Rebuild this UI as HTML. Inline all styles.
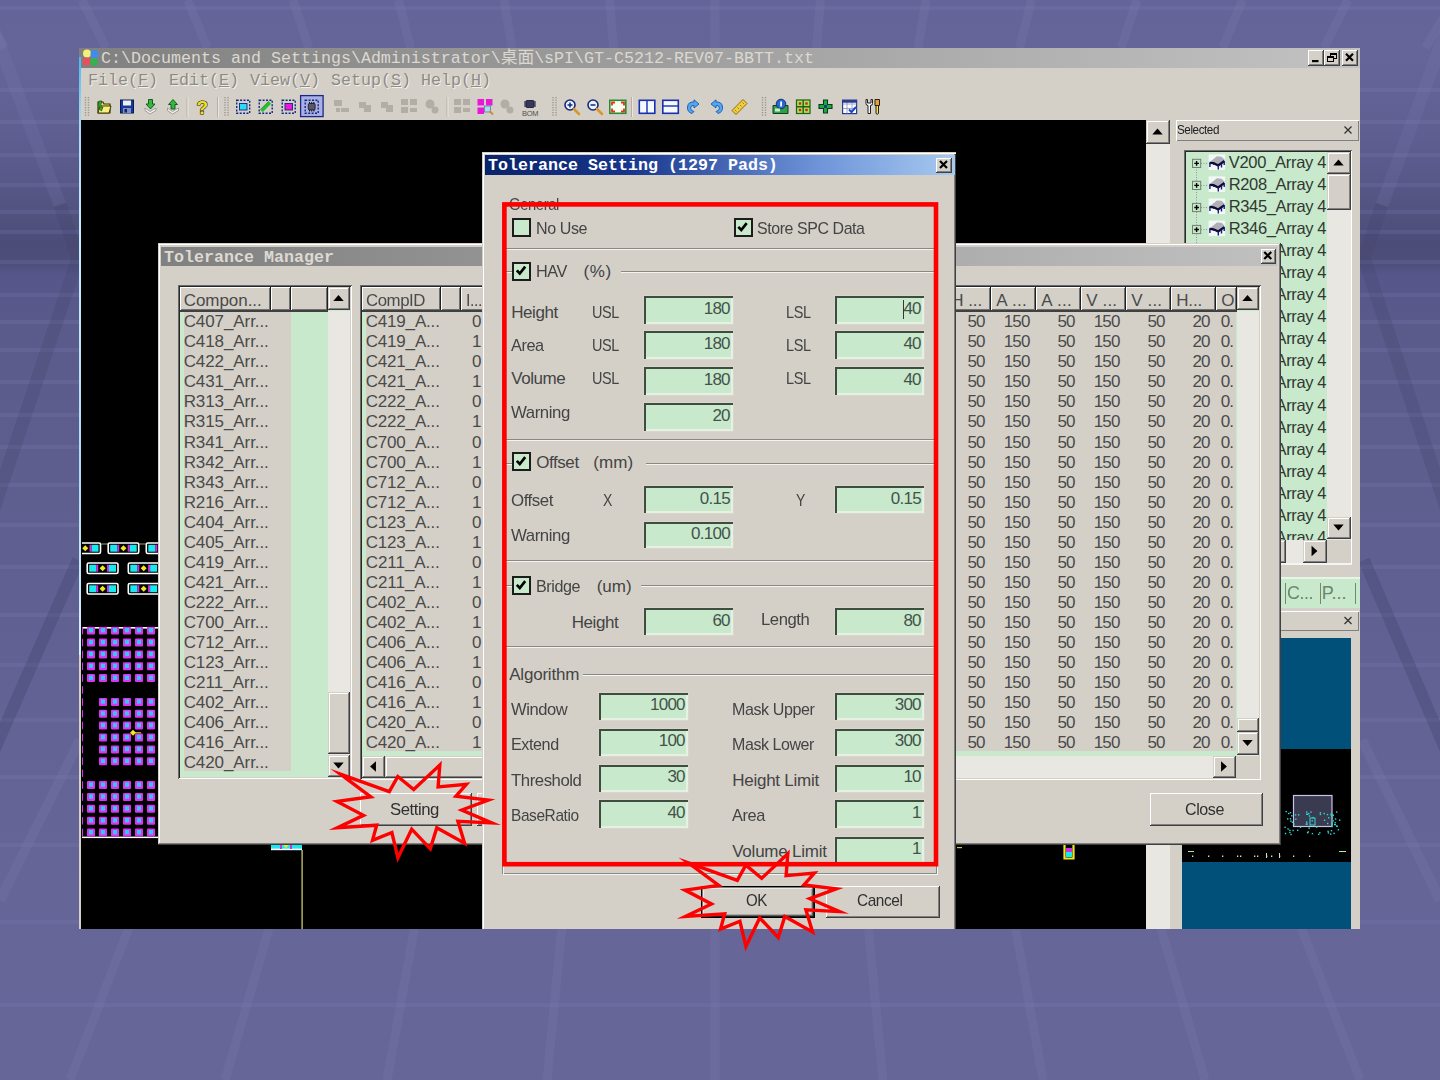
<!DOCTYPE html><html><head><meta charset='utf-8'><title>Tolerance Setting</title><style>
html,body{margin:0;padding:0;}
body{width:1440px;height:1080px;overflow:hidden;position:relative;background:#666698;font-family:"Liberation Sans",sans-serif;}
.a{position:absolute;box-sizing:border-box;}
.face{background:#d4d0c8;}
.win{background:#d4d0c8;box-shadow:inset -1px -1px 0 #404040,inset 1px 1px 0 #d4d0c8,inset -2px -2px 0 #808080,inset 2px 2px 0 #fff;}
.btn{background:#d4d0c8;box-shadow:inset -1px -1px 0 #404040,inset 1px 1px 0 #fff,inset -2px -2px 0 #808080;}
.sb{background:#d4d0c8;box-shadow:inset -1px -1px 0 #404040,inset 1px 1px 0 #d4d0c8,inset -2px -2px 0 #808080,inset 2px 2px 0 #fff;}
.sunk{box-shadow:inset 1px 1px 0 #6a6a6a,inset -1px -1px 0 #fff,inset 2px 2px 0 #282828,inset -2px -2px 0 #d4d0c8;}
.fld{background:#c9e9cd;box-shadow:inset 2px 2px 0 #3f4d41,inset -2px -2px 0 #e6f1e4,0 0 0 1px #d9d6ce;color:#46564a;}
.mono{font-family:"Liberation Mono","Noto Sans CJK SC",monospace;white-space:nowrap;}
.t{white-space:nowrap;color:#3c3c3c;font-size:17px;line-height:20px;}
.dith{background:#e9e7e2;}
.chk{background:#c9e9cd;border:2px solid #1c1c1c;}
.hl{height:2px;border-top:1px solid #8a8882;border-bottom:1px solid #f6f4f0;}
.hd{background:#d4d0c8;box-shadow:inset -1px -1px 0 #202020,inset 1px 1px 0 #fff,inset -2px -2px 0 #707070;}
svg{position:absolute;overflow:visible;}
</style></head><body><div class="a" id="bg" style="left:0;top:0;width:1440px;height:1080px;background:linear-gradient(180deg,#64649a 0px,#656599 60px,#5f5f92 130px,#585889 180px,#52527f 215px,#4c4c78 245px,#4e4e7a 262px,#56568a 275px,#5a5a8b 330px,#5d5d8e 450px,#606092 600px,#646496 800px,#666699 950px,#666699 1080px);"></div>
<svg class="a" style="left:0;top:0" width="1440" height="1080"><rect x="0" y="6" width="1440" height="4" fill="#8080b4" fill-opacity="0.22"/><rect x="0" y="88" width="1440" height="4" fill="#8080b4" fill-opacity="0.22"/><rect x="0" y="120" width="1440" height="4" fill="#8080b4" fill-opacity="0.22"/><rect x="0" y="153" width="1440" height="4" fill="#8080b4" fill-opacity="0.22"/><rect x="0" y="183" width="1440" height="4" fill="#8080b4" fill-opacity="0.22"/><rect x="0" y="210" width="1440" height="4" fill="#8080b4" fill-opacity="0.22"/><rect x="0" y="230" width="1440" height="4" fill="#8080b4" fill-opacity="0.22"/><rect x="0" y="260" width="1440" height="4" fill="#8080b4" fill-opacity="0.22"/><rect x="0" y="293" width="1440" height="4" fill="#8080b4" fill-opacity="0.22"/><rect x="0" y="320" width="1440" height="4" fill="#8080b4" fill-opacity="0.22"/><rect x="0" y="348" width="1440" height="4" fill="#8080b4" fill-opacity="0.22"/><rect x="0" y="380" width="1440" height="4" fill="#8080b4" fill-opacity="0.22"/><rect x="0" y="413" width="1440" height="4" fill="#8080b4" fill-opacity="0.22"/><rect x="0" y="445" width="1440" height="4" fill="#8080b4" fill-opacity="0.22"/><rect x="0" y="483" width="1440" height="4" fill="#8080b4" fill-opacity="0.22"/><rect x="0" y="523" width="1440" height="4" fill="#8080b4" fill-opacity="0.22"/><rect x="0" y="565" width="1440" height="4" fill="#8080b4" fill-opacity="0.22"/><rect x="0" y="613" width="1440" height="4" fill="#8080b4" fill-opacity="0.22"/><rect x="0" y="663" width="1440" height="4" fill="#8080b4" fill-opacity="0.22"/><rect x="0" y="718" width="1440" height="4" fill="#8080b4" fill-opacity="0.22"/><rect x="0" y="775" width="1440" height="4" fill="#8080b4" fill-opacity="0.22"/><rect x="0" y="843" width="1440" height="4" fill="#8080b4" fill-opacity="0.22"/><rect x="0" y="920" width="1440" height="4" fill="#8080b4" fill-opacity="0.22"/><rect x="0" y="1003" width="1440" height="4" fill="#8080b4" fill-opacity="0.22"/><path d="M715,925 L715,1080 M868,925 L883,1080 M562,925 L547,1080 M1015,925 L1043,1080 M415,925 L387,1080 M1160,925 L1205,1080 M270,925 L225,1080 M1300,925 L1360,1080 M130,925 L70,1080 M1450,925 L1525,1080 M-20,925 L-95,1080 M-23.5,0 L4.5,48 M82.0,0 L106.0,48 M187.5,0 L207.5,48 M293.0,0 L309.0,48 M398.5,0 L410.5,48 M504.0,0 L512.0,48 M609.5,0 L613.5,48 M715.0,0 L715.0,48 M820.5,0 L816.5,48 M926.0,0 L918.0,48 M1031.5,0 L1019.5,48 M1137.0,0 L1121.0,48 M1242.5,0 L1222.5,48 M1348.0,0 L1324.0,48 M1453.5,0 L1425.5,48 " stroke="#8080b4" stroke-opacity="0.2" stroke-width="9" fill="none"/><path d="M-10,20 L60,205 M1450,20 L1382,205" stroke="#8484b8" stroke-opacity="0.16" stroke-width="13" fill="none"/><path d="M60,205 L78,258 L-10,520 M1382,205 L1364,258 L1450,520" stroke="#40406a" stroke-opacity="0.22" stroke-width="13" fill="none"/><path d="M78,560 L-10,760 M1364,560 L1450,760" stroke="#40406a" stroke-opacity="0.3" stroke-width="12" fill="none"/><path d="M80,740 L0,900 M1362,740 L1440,900" stroke="#8080b4" stroke-opacity="0.2" stroke-width="10" fill="none"/></svg>
<div class="a face" style="left:79px;top:48px;width:1281px;height:881px;"></div>
<div class="a " style="left:79px;top:48px;width:1281px;height:20px;background:linear-gradient(90deg,#808080 0%,#c2c2c2 100%);"></div>
<svg class="a" style="left:82px;top:49px" width="18" height="18"><circle cx="5" cy="4.5" r="4" fill="#f4f07a"/><circle cx="12.5" cy="5" r="4" fill="#3d8df0"/><circle cx="4.5" cy="12.5" r="4" fill="#e8505a"/><circle cx="12" cy="13" r="4" fill="#38b050"/></svg>
<div class="a mono" style="left:101px;top:48px;font-size:16.67px;line-height:21px;color:#dcd8d0;">C:\Documents and Settings\Administrator\桌面\sPI\GT-C5212-REV07-BBTT.txt</div>
<div class="a btn" style="left:1308px;top:50px;width:16px;height:15.5px;"></div>
<div class="a btn" style="left:1324px;top:50px;width:16px;height:15.5px;"></div>
<svg class="a" style="left:0;top:0" width="1" height="1"><rect x="1312" y="60" width="6.5" height="2.2" fill="#000"/><rect x="1330.5" y="53.5" width="6" height="5" fill="none" stroke="#000"/><rect x="1330" y="53" width="7" height="2" fill="#000"/><rect x="1327.5" y="56.5" width="6" height="5" fill="#d4d0c8" stroke="#000"/><rect x="1327" y="56" width="7" height="2" fill="#000"/></svg>
<div class="a btn" style="left:1342px;top:50px;width:16px;height:15.5px;"></div>
<svg class="a" style="left:0;top:0" width="1" height="1"><path d="M1346.0,53.75 L1353.0,60.75 M1353.0,53.75 L1346.0,60.75" stroke="#000" stroke-width="2.2" fill="none"/></svg>
<div class="a mono" style="left:88px;top:70px;font-size:16.67px;line-height:22px;color:#8e8a84;text-shadow:1px 1px 0 #f2f0ea;">File(<u>F</u>)</div>
<div class="a mono" style="left:169px;top:70px;font-size:16.67px;line-height:22px;color:#8e8a84;text-shadow:1px 1px 0 #f2f0ea;">Edit(<u>E</u>)</div>
<div class="a mono" style="left:250px;top:70px;font-size:16.67px;line-height:22px;color:#8e8a84;text-shadow:1px 1px 0 #f2f0ea;">View(<u>V</u>)</div>
<div class="a mono" style="left:331px;top:70px;font-size:16.67px;line-height:22px;color:#8e8a84;text-shadow:1px 1px 0 #f2f0ea;">Setup(<u>S</u>)</div>
<div class="a mono" style="left:421px;top:70px;font-size:16.67px;line-height:22px;color:#8e8a84;text-shadow:1px 1px 0 #f2f0ea;">Help(<u>H</u>)</div>
<div class="a " style="left:81px;top:120px;width:1065px;height:809px;background:#000;"></div>
<div class="a " style="left:79px;top:57px;width:2px;height:598px;background:linear-gradient(180deg,#48b8f0,#9fd8f4 10%,#c8ecff 30%,#a8dcf4 70%,#d8f0ff);"></div>
<div class="a dith" style="left:1146px;top:120px;width:24px;height:809px;"></div>
<div class="a sb" style="left:1146px;top:120px;width:24px;height:24px;"></div>
<svg class="a" style="left:0;top:0" width="1" height="1"><polygon points="1152.3,134.412 1162.7,134.412 1157.5,128.588" fill="#000"/></svg>
<svg class="a" style="left:0;top:0" width="1440" height="1080"><clipPath id="cv"><rect x="82" y="120" width="76" height="809"/></clipPath><g clip-path="url(#cv)"><path d="M100,544 H108 M139,544 H146" stroke="#a0a060" stroke-width="1"/><rect x="70" y="543" width="30.5" height="10.5" rx="1.5" fill="#000" stroke="#fff" stroke-width="1.6"/><rect x="72" y="544.8" width="7" height="6.9" fill="#18e8f0"/><rect x="91.5" y="544.8" width="7" height="6.9" fill="#18e8f0"/><rect x="79" y="544.8" width="2" height="6.9" fill="#d030e0"/><rect x="89.5" y="544.8" width="2" height="6.9" fill="#d030e0"/><polygon points="82.25,548.25 85.25,545.25 88.25,548.25 85.25,551.25" fill="#f0e820"/><rect x="108.2" y="543" width="30.5" height="10.5" rx="1.5" fill="#000" stroke="#fff" stroke-width="1.6"/><rect x="110.2" y="544.8" width="7" height="6.9" fill="#18e8f0"/><rect x="129.7" y="544.8" width="7" height="6.9" fill="#18e8f0"/><rect x="117.2" y="544.8" width="2" height="6.9" fill="#d030e0"/><rect x="127.69999999999999" y="544.8" width="2" height="6.9" fill="#d030e0"/><polygon points="120.45,548.25 123.45,545.25 126.45,548.25 123.45,551.25" fill="#f0e820"/><rect x="146.3" y="543" width="30.5" height="10.5" rx="1.5" fill="#000" stroke="#fff" stroke-width="1.6"/><rect x="148.3" y="544.8" width="7" height="6.9" fill="#18e8f0"/><rect x="167.8" y="544.8" width="7" height="6.9" fill="#18e8f0"/><rect x="155.3" y="544.8" width="2" height="6.9" fill="#d030e0"/><rect x="165.8" y="544.8" width="2" height="6.9" fill="#d030e0"/><polygon points="158.55,548.25 161.55,545.25 164.55,548.25 161.55,551.25" fill="#f0e820"/><rect x="87.2" y="563" width="30.8" height="10.5" rx="1.5" fill="#000" stroke="#fff" stroke-width="1.6"/><rect x="89.2" y="564.8" width="7" height="6.9" fill="#18e8f0"/><rect x="109.0" y="564.8" width="7" height="6.9" fill="#18e8f0"/><rect x="96.2" y="564.8" width="2" height="6.9" fill="#d030e0"/><rect x="107.0" y="564.8" width="2" height="6.9" fill="#d030e0"/><polygon points="99.60000000000001,568.25 102.60000000000001,565.25 105.60000000000001,568.25 102.60000000000001,571.25" fill="#f0e820"/><rect x="128.3" y="563" width="30.8" height="10.5" rx="1.5" fill="#000" stroke="#fff" stroke-width="1.6"/><rect x="130.3" y="564.8" width="7" height="6.9" fill="#18e8f0"/><rect x="150.10000000000002" y="564.8" width="7" height="6.9" fill="#18e8f0"/><rect x="137.3" y="564.8" width="2" height="6.9" fill="#d030e0"/><rect x="148.10000000000002" y="564.8" width="2" height="6.9" fill="#d030e0"/><polygon points="140.70000000000002,568.25 143.70000000000002,565.25 146.70000000000002,568.25 143.70000000000002,571.25" fill="#f0e820"/><rect x="87.2" y="583.5" width="30.8" height="10.5" rx="1.5" fill="#000" stroke="#fff" stroke-width="1.6"/><rect x="89.2" y="585.3" width="7" height="6.9" fill="#18e8f0"/><rect x="109.0" y="585.3" width="7" height="6.9" fill="#18e8f0"/><rect x="96.2" y="585.3" width="2" height="6.9" fill="#d030e0"/><rect x="107.0" y="585.3" width="2" height="6.9" fill="#d030e0"/><polygon points="99.60000000000001,588.75 102.60000000000001,585.75 105.60000000000001,588.75 102.60000000000001,591.75" fill="#f0e820"/><rect x="128.3" y="583.5" width="30.8" height="10.5" rx="1.5" fill="#000" stroke="#fff" stroke-width="1.6"/><rect x="130.3" y="585.3" width="7" height="6.9" fill="#18e8f0"/><rect x="150.10000000000002" y="585.3" width="7" height="6.9" fill="#18e8f0"/><rect x="137.3" y="585.3" width="2" height="6.9" fill="#d030e0"/><rect x="148.10000000000002" y="585.3" width="2" height="6.9" fill="#d030e0"/><polygon points="140.70000000000002,588.75 143.70000000000002,585.75 146.70000000000002,588.75 143.70000000000002,591.75" fill="#f0e820"/><rect x="82" y="627" width="80" height="1.6" fill="#fff"/><rect x="82" y="836.6" width="80" height="1.6" fill="#fff"/><rect x="75.0" y="626.6" width="8" height="8" rx="1" fill="#e030f0"/><rect x="77.0" y="628.0" width="4" height="4.4" fill="#30c8f8"/><rect x="87.0" y="626.6" width="8" height="8" rx="1" fill="#e030f0"/><rect x="89.0" y="628.0" width="4" height="4.4" fill="#30c8f8"/><rect x="99.0" y="626.6" width="8" height="8" rx="1" fill="#e030f0"/><rect x="101.0" y="628.0" width="4" height="4.4" fill="#30c8f8"/><rect x="111.0" y="626.6" width="8" height="8" rx="1" fill="#e030f0"/><rect x="113.0" y="628.0" width="4" height="4.4" fill="#30c8f8"/><rect x="123.0" y="626.6" width="8" height="8" rx="1" fill="#e030f0"/><rect x="125.0" y="628.0" width="4" height="4.4" fill="#30c8f8"/><rect x="135.0" y="626.6" width="8" height="8" rx="1" fill="#e030f0"/><rect x="137.0" y="628.0" width="4" height="4.4" fill="#30c8f8"/><rect x="147.0" y="626.6" width="8" height="8" rx="1" fill="#e030f0"/><rect x="149.0" y="628.0" width="4" height="4.4" fill="#30c8f8"/><rect x="75.0" y="638.5" width="8" height="8" rx="1" fill="#e030f0"/><rect x="77.0" y="639.9" width="4" height="4.4" fill="#30c8f8"/><rect x="87.0" y="638.5" width="8" height="8" rx="1" fill="#e030f0"/><rect x="89.0" y="639.9" width="4" height="4.4" fill="#30c8f8"/><rect x="99.0" y="638.5" width="8" height="8" rx="1" fill="#e030f0"/><rect x="101.0" y="639.9" width="4" height="4.4" fill="#30c8f8"/><rect x="111.0" y="638.5" width="8" height="8" rx="1" fill="#e030f0"/><rect x="113.0" y="639.9" width="4" height="4.4" fill="#30c8f8"/><rect x="123.0" y="638.5" width="8" height="8" rx="1" fill="#e030f0"/><rect x="125.0" y="639.9" width="4" height="4.4" fill="#30c8f8"/><rect x="135.0" y="638.5" width="8" height="8" rx="1" fill="#e030f0"/><rect x="137.0" y="639.9" width="4" height="4.4" fill="#30c8f8"/><rect x="147.0" y="638.5" width="8" height="8" rx="1" fill="#e030f0"/><rect x="149.0" y="639.9" width="4" height="4.4" fill="#30c8f8"/><rect x="75.0" y="650.4" width="8" height="8" rx="1" fill="#e030f0"/><rect x="77.0" y="651.8" width="4" height="4.4" fill="#30c8f8"/><rect x="87.0" y="650.4" width="8" height="8" rx="1" fill="#e030f0"/><rect x="89.0" y="651.8" width="4" height="4.4" fill="#30c8f8"/><rect x="99.0" y="650.4" width="8" height="8" rx="1" fill="#e030f0"/><rect x="101.0" y="651.8" width="4" height="4.4" fill="#30c8f8"/><rect x="111.0" y="650.4" width="8" height="8" rx="1" fill="#e030f0"/><rect x="113.0" y="651.8" width="4" height="4.4" fill="#30c8f8"/><rect x="123.0" y="650.4" width="8" height="8" rx="1" fill="#e030f0"/><rect x="125.0" y="651.8" width="4" height="4.4" fill="#30c8f8"/><rect x="135.0" y="650.4" width="8" height="8" rx="1" fill="#e030f0"/><rect x="137.0" y="651.8" width="4" height="4.4" fill="#30c8f8"/><rect x="147.0" y="650.4" width="8" height="8" rx="1" fill="#e030f0"/><rect x="149.0" y="651.8" width="4" height="4.4" fill="#30c8f8"/><rect x="75.0" y="662.2" width="8" height="8" rx="1" fill="#e030f0"/><rect x="77.0" y="663.6" width="4" height="4.4" fill="#30c8f8"/><rect x="87.0" y="662.2" width="8" height="8" rx="1" fill="#e030f0"/><rect x="89.0" y="663.6" width="4" height="4.4" fill="#30c8f8"/><rect x="99.0" y="662.2" width="8" height="8" rx="1" fill="#e030f0"/><rect x="101.0" y="663.6" width="4" height="4.4" fill="#30c8f8"/><rect x="111.0" y="662.2" width="8" height="8" rx="1" fill="#e030f0"/><rect x="113.0" y="663.6" width="4" height="4.4" fill="#30c8f8"/><rect x="123.0" y="662.2" width="8" height="8" rx="1" fill="#e030f0"/><rect x="125.0" y="663.6" width="4" height="4.4" fill="#30c8f8"/><rect x="135.0" y="662.2" width="8" height="8" rx="1" fill="#e030f0"/><rect x="137.0" y="663.6" width="4" height="4.4" fill="#30c8f8"/><rect x="147.0" y="662.2" width="8" height="8" rx="1" fill="#e030f0"/><rect x="149.0" y="663.6" width="4" height="4.4" fill="#30c8f8"/><rect x="75.0" y="674.1" width="8" height="8" rx="1" fill="#e030f0"/><rect x="77.0" y="675.5" width="4" height="4.4" fill="#30c8f8"/><rect x="87.0" y="674.1" width="8" height="8" rx="1" fill="#e030f0"/><rect x="89.0" y="675.5" width="4" height="4.4" fill="#30c8f8"/><rect x="99.0" y="674.1" width="8" height="8" rx="1" fill="#e030f0"/><rect x="101.0" y="675.5" width="4" height="4.4" fill="#30c8f8"/><rect x="111.0" y="674.1" width="8" height="8" rx="1" fill="#e030f0"/><rect x="113.0" y="675.5" width="4" height="4.4" fill="#30c8f8"/><rect x="123.0" y="674.1" width="8" height="8" rx="1" fill="#e030f0"/><rect x="125.0" y="675.5" width="4" height="4.4" fill="#30c8f8"/><rect x="135.0" y="674.1" width="8" height="8" rx="1" fill="#e030f0"/><rect x="137.0" y="675.5" width="4" height="4.4" fill="#30c8f8"/><rect x="147.0" y="674.1" width="8" height="8" rx="1" fill="#e030f0"/><rect x="149.0" y="675.5" width="4" height="4.4" fill="#30c8f8"/><rect x="75.0" y="686.0" width="8" height="8" rx="1" fill="#e030f0"/><rect x="77.0" y="687.4" width="4" height="4.4" fill="#30c8f8"/><rect x="75.0" y="697.9" width="8" height="8" rx="1" fill="#e030f0"/><rect x="77.0" y="699.3" width="4" height="4.4" fill="#30c8f8"/><rect x="99.0" y="697.9" width="8" height="8" rx="1" fill="#e030f0"/><rect x="101.0" y="699.3" width="4" height="4.4" fill="#30c8f8"/><rect x="111.0" y="697.9" width="8" height="8" rx="1" fill="#e030f0"/><rect x="113.0" y="699.3" width="4" height="4.4" fill="#30c8f8"/><rect x="123.0" y="697.9" width="8" height="8" rx="1" fill="#e030f0"/><rect x="125.0" y="699.3" width="4" height="4.4" fill="#30c8f8"/><rect x="135.0" y="697.9" width="8" height="8" rx="1" fill="#e030f0"/><rect x="137.0" y="699.3" width="4" height="4.4" fill="#30c8f8"/><rect x="147.0" y="697.9" width="8" height="8" rx="1" fill="#e030f0"/><rect x="149.0" y="699.3" width="4" height="4.4" fill="#30c8f8"/><rect x="75.0" y="709.8" width="8" height="8" rx="1" fill="#e030f0"/><rect x="77.0" y="711.2" width="4" height="4.4" fill="#30c8f8"/><rect x="99.0" y="709.8" width="8" height="8" rx="1" fill="#e030f0"/><rect x="101.0" y="711.2" width="4" height="4.4" fill="#30c8f8"/><rect x="111.0" y="709.8" width="8" height="8" rx="1" fill="#e030f0"/><rect x="113.0" y="711.2" width="4" height="4.4" fill="#30c8f8"/><rect x="123.0" y="709.8" width="8" height="8" rx="1" fill="#e030f0"/><rect x="125.0" y="711.2" width="4" height="4.4" fill="#30c8f8"/><rect x="135.0" y="709.8" width="8" height="8" rx="1" fill="#e030f0"/><rect x="137.0" y="711.2" width="4" height="4.4" fill="#30c8f8"/><rect x="147.0" y="709.8" width="8" height="8" rx="1" fill="#e030f0"/><rect x="149.0" y="711.2" width="4" height="4.4" fill="#30c8f8"/><rect x="75.0" y="721.6" width="8" height="8" rx="1" fill="#e030f0"/><rect x="77.0" y="723.0" width="4" height="4.4" fill="#30c8f8"/><rect x="99.0" y="721.6" width="8" height="8" rx="1" fill="#e030f0"/><rect x="101.0" y="723.0" width="4" height="4.4" fill="#30c8f8"/><rect x="111.0" y="721.6" width="8" height="8" rx="1" fill="#e030f0"/><rect x="113.0" y="723.0" width="4" height="4.4" fill="#30c8f8"/><rect x="123.0" y="721.6" width="8" height="8" rx="1" fill="#e030f0"/><rect x="125.0" y="723.0" width="4" height="4.4" fill="#30c8f8"/><rect x="135.0" y="721.6" width="8" height="8" rx="1" fill="#e030f0"/><rect x="137.0" y="723.0" width="4" height="4.4" fill="#30c8f8"/><rect x="147.0" y="721.6" width="8" height="8" rx="1" fill="#e030f0"/><rect x="149.0" y="723.0" width="4" height="4.4" fill="#30c8f8"/><rect x="75.0" y="733.5" width="8" height="8" rx="1" fill="#e030f0"/><rect x="77.0" y="734.9" width="4" height="4.4" fill="#30c8f8"/><rect x="99.0" y="733.5" width="8" height="8" rx="1" fill="#e030f0"/><rect x="101.0" y="734.9" width="4" height="4.4" fill="#30c8f8"/><rect x="111.0" y="733.5" width="8" height="8" rx="1" fill="#e030f0"/><rect x="113.0" y="734.9" width="4" height="4.4" fill="#30c8f8"/><rect x="123.0" y="733.5" width="8" height="8" rx="1" fill="#e030f0"/><rect x="125.0" y="734.9" width="4" height="4.4" fill="#30c8f8"/><rect x="135.0" y="733.5" width="8" height="8" rx="1" fill="#e030f0"/><rect x="137.0" y="734.9" width="4" height="4.4" fill="#30c8f8"/><rect x="147.0" y="733.5" width="8" height="8" rx="1" fill="#e030f0"/><rect x="149.0" y="734.9" width="4" height="4.4" fill="#30c8f8"/><rect x="75.0" y="745.4" width="8" height="8" rx="1" fill="#e030f0"/><rect x="77.0" y="746.8" width="4" height="4.4" fill="#30c8f8"/><rect x="99.0" y="745.4" width="8" height="8" rx="1" fill="#e030f0"/><rect x="101.0" y="746.8" width="4" height="4.4" fill="#30c8f8"/><rect x="111.0" y="745.4" width="8" height="8" rx="1" fill="#e030f0"/><rect x="113.0" y="746.8" width="4" height="4.4" fill="#30c8f8"/><rect x="123.0" y="745.4" width="8" height="8" rx="1" fill="#e030f0"/><rect x="125.0" y="746.8" width="4" height="4.4" fill="#30c8f8"/><rect x="135.0" y="745.4" width="8" height="8" rx="1" fill="#e030f0"/><rect x="137.0" y="746.8" width="4" height="4.4" fill="#30c8f8"/><rect x="147.0" y="745.4" width="8" height="8" rx="1" fill="#e030f0"/><rect x="149.0" y="746.8" width="4" height="4.4" fill="#30c8f8"/><rect x="75.0" y="757.3" width="8" height="8" rx="1" fill="#e030f0"/><rect x="77.0" y="758.7" width="4" height="4.4" fill="#30c8f8"/><rect x="99.0" y="757.3" width="8" height="8" rx="1" fill="#e030f0"/><rect x="101.0" y="758.7" width="4" height="4.4" fill="#30c8f8"/><rect x="111.0" y="757.3" width="8" height="8" rx="1" fill="#e030f0"/><rect x="113.0" y="758.7" width="4" height="4.4" fill="#30c8f8"/><rect x="123.0" y="757.3" width="8" height="8" rx="1" fill="#e030f0"/><rect x="125.0" y="758.7" width="4" height="4.4" fill="#30c8f8"/><rect x="135.0" y="757.3" width="8" height="8" rx="1" fill="#e030f0"/><rect x="137.0" y="758.7" width="4" height="4.4" fill="#30c8f8"/><rect x="147.0" y="757.3" width="8" height="8" rx="1" fill="#e030f0"/><rect x="149.0" y="758.7" width="4" height="4.4" fill="#30c8f8"/><rect x="75.0" y="769.2" width="8" height="8" rx="1" fill="#e030f0"/><rect x="77.0" y="770.6" width="4" height="4.4" fill="#30c8f8"/><rect x="75.0" y="781.0" width="8" height="8" rx="1" fill="#e030f0"/><rect x="77.0" y="782.4" width="4" height="4.4" fill="#30c8f8"/><rect x="87.0" y="781.0" width="8" height="8" rx="1" fill="#e030f0"/><rect x="89.0" y="782.4" width="4" height="4.4" fill="#30c8f8"/><rect x="99.0" y="781.0" width="8" height="8" rx="1" fill="#e030f0"/><rect x="101.0" y="782.4" width="4" height="4.4" fill="#30c8f8"/><rect x="111.0" y="781.0" width="8" height="8" rx="1" fill="#e030f0"/><rect x="113.0" y="782.4" width="4" height="4.4" fill="#30c8f8"/><rect x="123.0" y="781.0" width="8" height="8" rx="1" fill="#e030f0"/><rect x="125.0" y="782.4" width="4" height="4.4" fill="#30c8f8"/><rect x="135.0" y="781.0" width="8" height="8" rx="1" fill="#e030f0"/><rect x="137.0" y="782.4" width="4" height="4.4" fill="#30c8f8"/><rect x="147.0" y="781.0" width="8" height="8" rx="1" fill="#e030f0"/><rect x="149.0" y="782.4" width="4" height="4.4" fill="#30c8f8"/><rect x="75.0" y="792.9" width="8" height="8" rx="1" fill="#e030f0"/><rect x="77.0" y="794.3" width="4" height="4.4" fill="#30c8f8"/><rect x="87.0" y="792.9" width="8" height="8" rx="1" fill="#e030f0"/><rect x="89.0" y="794.3" width="4" height="4.4" fill="#30c8f8"/><rect x="99.0" y="792.9" width="8" height="8" rx="1" fill="#e030f0"/><rect x="101.0" y="794.3" width="4" height="4.4" fill="#30c8f8"/><rect x="111.0" y="792.9" width="8" height="8" rx="1" fill="#e030f0"/><rect x="113.0" y="794.3" width="4" height="4.4" fill="#30c8f8"/><rect x="123.0" y="792.9" width="8" height="8" rx="1" fill="#e030f0"/><rect x="125.0" y="794.3" width="4" height="4.4" fill="#30c8f8"/><rect x="135.0" y="792.9" width="8" height="8" rx="1" fill="#e030f0"/><rect x="137.0" y="794.3" width="4" height="4.4" fill="#30c8f8"/><rect x="147.0" y="792.9" width="8" height="8" rx="1" fill="#e030f0"/><rect x="149.0" y="794.3" width="4" height="4.4" fill="#30c8f8"/><rect x="75.0" y="804.8" width="8" height="8" rx="1" fill="#e030f0"/><rect x="77.0" y="806.2" width="4" height="4.4" fill="#30c8f8"/><rect x="87.0" y="804.8" width="8" height="8" rx="1" fill="#e030f0"/><rect x="89.0" y="806.2" width="4" height="4.4" fill="#30c8f8"/><rect x="99.0" y="804.8" width="8" height="8" rx="1" fill="#e030f0"/><rect x="101.0" y="806.2" width="4" height="4.4" fill="#30c8f8"/><rect x="111.0" y="804.8" width="8" height="8" rx="1" fill="#e030f0"/><rect x="113.0" y="806.2" width="4" height="4.4" fill="#30c8f8"/><rect x="123.0" y="804.8" width="8" height="8" rx="1" fill="#e030f0"/><rect x="125.0" y="806.2" width="4" height="4.4" fill="#30c8f8"/><rect x="135.0" y="804.8" width="8" height="8" rx="1" fill="#e030f0"/><rect x="137.0" y="806.2" width="4" height="4.4" fill="#30c8f8"/><rect x="147.0" y="804.8" width="8" height="8" rx="1" fill="#e030f0"/><rect x="149.0" y="806.2" width="4" height="4.4" fill="#30c8f8"/><rect x="75.0" y="816.7" width="8" height="8" rx="1" fill="#e030f0"/><rect x="77.0" y="818.1" width="4" height="4.4" fill="#30c8f8"/><rect x="87.0" y="816.7" width="8" height="8" rx="1" fill="#e030f0"/><rect x="89.0" y="818.1" width="4" height="4.4" fill="#30c8f8"/><rect x="99.0" y="816.7" width="8" height="8" rx="1" fill="#e030f0"/><rect x="101.0" y="818.1" width="4" height="4.4" fill="#30c8f8"/><rect x="111.0" y="816.7" width="8" height="8" rx="1" fill="#e030f0"/><rect x="113.0" y="818.1" width="4" height="4.4" fill="#30c8f8"/><rect x="123.0" y="816.7" width="8" height="8" rx="1" fill="#e030f0"/><rect x="125.0" y="818.1" width="4" height="4.4" fill="#30c8f8"/><rect x="135.0" y="816.7" width="8" height="8" rx="1" fill="#e030f0"/><rect x="137.0" y="818.1" width="4" height="4.4" fill="#30c8f8"/><rect x="147.0" y="816.7" width="8" height="8" rx="1" fill="#e030f0"/><rect x="149.0" y="818.1" width="4" height="4.4" fill="#30c8f8"/><rect x="75.0" y="828.6" width="8" height="8" rx="1" fill="#e030f0"/><rect x="77.0" y="830.0" width="4" height="4.4" fill="#30c8f8"/><rect x="87.0" y="828.6" width="8" height="8" rx="1" fill="#e030f0"/><rect x="89.0" y="830.0" width="4" height="4.4" fill="#30c8f8"/><rect x="99.0" y="828.6" width="8" height="8" rx="1" fill="#e030f0"/><rect x="101.0" y="830.0" width="4" height="4.4" fill="#30c8f8"/><rect x="111.0" y="828.6" width="8" height="8" rx="1" fill="#e030f0"/><rect x="113.0" y="830.0" width="4" height="4.4" fill="#30c8f8"/><rect x="123.0" y="828.6" width="8" height="8" rx="1" fill="#e030f0"/><rect x="125.0" y="830.0" width="4" height="4.4" fill="#30c8f8"/><rect x="135.0" y="828.6" width="8" height="8" rx="1" fill="#e030f0"/><rect x="137.0" y="830.0" width="4" height="4.4" fill="#30c8f8"/><rect x="147.0" y="828.6" width="8" height="8" rx="1" fill="#e030f0"/><rect x="149.0" y="830.0" width="4" height="4.4" fill="#30c8f8"/><path d="M133,732.8 H141" stroke="#f0e820" stroke-width="1"/><polygon points="130,732.8 133,729.8 136,732.8 133,735.8" fill="#f0e820"/></g><rect x="82" y="620" width="76" height="6.8" fill="#000"/><rect x="82" y="838.4" width="76" height="6" fill="#000"/><rect x="271" y="845" width="31" height="5" fill="#18e8f0"/><rect x="271" y="848.6" width="31" height="1.6" fill="#fff"/><polygon points="283,845 289,845 286,848" fill="#f0e820"/><rect x="280" y="845" width="2" height="4" fill="#d030e0"/><rect x="290" y="845" width="2" height="4" fill="#d030e0"/><rect x="301.5" y="850" width="1.2" height="79" fill="#dcdc78"/><path d="M1064.5,845 V858.5 H1073.5 V845" stroke="#f0e820" stroke-width="2.2" fill="none"/><rect x="1066" y="848" width="6" height="4" fill="#d030e0"/><rect x="1066" y="852" width="6" height="5" fill="#18e8f0"/><rect x="957" y="847" width="5" height="1.2" fill="#c8c850"/></svg>
<svg class="a" style="left:0;top:0" width="1440" height="125"><path d="M85.5,97 V116 M88.5,97 V116" stroke="#9a968e" stroke-width="1.4" stroke-dasharray="1.2 1.3"/><g transform="translate(97,99)"><path d="M1,3 H6 L7,5 H13 V14 H1 Z" fill="#e8d860" stroke="#403800" stroke-width="1.2"/><path d="M3,7 H14 L12,14 H1 Z" fill="#f8f080" stroke="#403800" stroke-width="1"/><path d="M2,2 Q0,6 3,9 L1,9 L4.5,12 L6,8 L4.5,8.5 Q3,6 5,2 Z" fill="#30a838" stroke="#104010" stroke-width="0.6"/></g><g transform="translate(120,99.5)"><rect x="0.5" y="0.5" width="13" height="13" fill="#1838a0" stroke="#081850"/><rect x="3" y="1" width="8" height="5" fill="#f0f0f0"/><rect x="3" y="8.5" width="8" height="5" fill="#8090c0"/><rect x="4.5" y="9.5" width="2.5" height="3.5" fill="#102060"/></g><g transform="translate(144,99)"><path d="M1,9 L6,12.5 L12,9 L12,11.5 L6,15 L1,11.5 Z" fill="#f4f4f4" stroke="#8a8a8a" stroke-width="0.8"/><path d="M4.5,0.5 H8.5 V5 H11 L6.5,10 L2,5 H4.5 Z" fill="#30b840" stroke="#0c5014" stroke-width="0.9"/></g><g transform="translate(166.5,99)"><path d="M1,9 L6,12.5 L12,9 L12,11.5 L6,15 L1,11.5 Z" fill="#f4f4f4" stroke="#8a8a8a" stroke-width="0.8"/><path d="M6.5,0.5 L11,5.5 H8.5 V10 H4.5 V5.5 H2 Z" fill="#30b840" stroke="#0c5014" stroke-width="0.9"/></g><path d="M187,97 V117" stroke="#b4b0a8" stroke-width="1"/><path d="M188,97 V117" stroke="#e8e6e0" stroke-width="1"/><text x="196.5" y="113.5" font-family="Liberation Sans,sans-serif" font-weight="bold" font-size="19" fill="#f0e020" stroke="#201800" stroke-width="1.1" paint-order="stroke">?</text><path d="M217.5,97 V117" stroke="#b4b0a8" stroke-width="1"/><path d="M218.5,97 V117" stroke="#e8e6e0" stroke-width="1"/><path d="M225,97 V116 M228,97 V116" stroke="#9a968e" stroke-width="1.4" stroke-dasharray="1.2 1.3"/><g transform="translate(236,99.5)"><rect x="0.7" y="0.7" width="13" height="13" fill="none" stroke="#102880" stroke-width="1.4" stroke-dasharray="2 1.4"/><rect x="3.5" y="4" width="7.5" height="6.5" fill="#30d8f8" stroke="#102880" stroke-width="0.9"/></g><g transform="translate(258.5,99.5)"><rect x="0.7" y="0.7" width="13" height="13" fill="none" stroke="#102880" stroke-width="1.4" stroke-dasharray="2 1.4"/><path d="M3,11.5 L11.5,3" stroke="#20c030" stroke-width="3.2"/><path d="M3,11.5 L11.5,3" stroke="#104818" stroke-width="0.5" transform="translate(-1.4,-1.2)"/></g><g transform="translate(281.5,99.5)"><rect x="0.7" y="0.7" width="13" height="13" fill="none" stroke="#102880" stroke-width="1.4" stroke-dasharray="2 1.4"/><rect x="3.5" y="4" width="7.5" height="6.5" fill="#f018d8" stroke="#102880" stroke-width="0.9"/></g><rect x="300.6" y="95.6" width="22.5" height="21" fill="#aab0e4" stroke="#182888" stroke-width="1.3"/><g transform="translate(304.5,99.5)"><rect x="0.7" y="0.7" width="13" height="13" fill="none" stroke="#102880" stroke-width="1.4" stroke-dasharray="2 1.4"/><rect x="3.8" y="4" width="6.8" height="6.5" rx="1" fill="#585868" stroke="#101020" stroke-width="0.8"/><path d="M5,2.5 V4 M7.2,2.5 V4 M9.4,2.5 V4 M5,10.5 V12 M7.2,10.5 V12 M9.4,10.5 V12" stroke="#101020" stroke-width="1"/></g><g fill="#b2aea6"><rect x="334" y="100" width="8" height="6"/><rect x="336" y="108" width="4" height="4"/><rect x="341" y="108" width="8" height="4"/></g><g fill="#b2aea6"><rect x="359" y="102" width="7" height="6"/><rect x="364" y="105" width="7" height="7"/></g><g fill="#b2aea6"><rect x="381" y="102" width="7" height="6"/><rect x="386" y="105" width="7" height="7"/></g><g fill="#b2aea6"><rect x="401" y="99" width="7" height="6"/><rect x="410" y="99" width="7" height="6"/><rect x="401" y="107" width="7" height="6"/><rect x="410" y="108" width="7" height="4"/></g><g fill="#b2aea6"><circle cx="430" cy="104" r="4.5"/><circle cx="435" cy="110" r="3.5"/></g><path d="M447,97 V117" stroke="#b4b0a8" stroke-width="1"/><path d="M448,97 V117" stroke="#e8e6e0" stroke-width="1"/><g fill="#b2aea6"><rect x="454" y="99" width="7" height="6"/><rect x="463" y="99" width="7" height="6"/><rect x="454" y="107" width="7" height="6"/><rect x="463" y="108" width="7" height="4"/></g><g transform="translate(477.5,99)"><rect x="0" y="0" width="6.5" height="6.5" fill="#e818d8"/><rect x="8.5" y="0" width="6.5" height="6.5" fill="#e818d8"/><rect x="0" y="8.5" width="6.5" height="6.5" fill="#e818d8"/><rect x="7" y="7" width="6" height="6" fill="#b0d8f0" stroke="#5080a0" stroke-width="0.8"/><path d="M12,12 L15.5,15.5" stroke="#c89030" stroke-width="2"/></g><g fill="#b2aea6"><circle cx="505" cy="104" r="4.5"/><circle cx="510" cy="110" r="3.5"/></g><g transform="translate(522,98)"><rect x="4" y="2.5" width="8" height="7" rx="1" fill="#383858" stroke="#101030" stroke-width="0.8"/><path d="M2,4 H4 M2,6 H4 M2,8 H4 M12,4 H14 M12,6 H14 M12,8 H14" stroke="#101030" stroke-width="1"/><text x="0" y="17.5" font-family="Liberation Sans,sans-serif" font-size="7.5" fill="#505050" letter-spacing="-0.3">BOM</text></g><path d="M553,97 V116 M556,97 V116" stroke="#9a968e" stroke-width="1.4" stroke-dasharray="1.2 1.3"/><g transform="translate(564,99)"><circle cx="6" cy="6" r="5" fill="#e8f4ff" stroke="#182878" stroke-width="1.6"/><path d="M10,10 L15,15" stroke="#d89828" stroke-width="2.6" stroke-linecap="round"/><path d="M3.5,6 H8.5" stroke="#182878" stroke-width="1.5"/><path d="M6,3.5 V8.5" stroke="#182878" stroke-width="1.5"/></g><g transform="translate(587,99)"><circle cx="6" cy="6" r="5" fill="#e8f4ff" stroke="#182878" stroke-width="1.6"/><path d="M10,10 L15,15" stroke="#d89828" stroke-width="2.6" stroke-linecap="round"/><path d="M3.5,6 H8.5" stroke="#182878" stroke-width="1.5"/></g><g transform="translate(609,99.5)"><rect x="0.8" y="0.8" width="16" height="13" fill="#f8fff0" stroke="#209030" stroke-width="1.6"/><path d="M3,6 V3 H6 M12,3 H15 V6 M15,9 V12 H12 M6,12 H3 V9" stroke="#e83020" stroke-width="1.8" fill="none"/></g><path d="M631.5,97 V117" stroke="#b4b0a8" stroke-width="1"/><path d="M632.5,97 V117" stroke="#e8e6e0" stroke-width="1"/><g transform="translate(638.5,99.5)"><rect x="0.8" y="0.8" width="15.5" height="13" fill="#f4f8ff" stroke="#1830b0" stroke-width="1.6"/><path d="M8.5,1 V14" stroke="#1830b0" stroke-width="1.4"/></g><g transform="translate(662,99.5)"><rect x="0.8" y="0.8" width="15.5" height="13" fill="#f4f8ff" stroke="#1830b0" stroke-width="1.6"/><path d="M1,6.5 H16" stroke="#1830b0" stroke-width="1.4"/></g><g transform="translate(686,99)"><path d="M1.5,8 Q2,2.5 8,3 L8,0.8 L13,5 L8,9 L8,6.5 Q5,6 4.5,9 Q5,12 8,12.5 L6,14.5 Q1,13 1.5,8 Z" fill="#50a8f0" stroke="#1858b0" stroke-width="0.9"/></g><g transform="translate(724,99) scale(-1,1)"><path d="M1.5,8 Q2,2.5 8,3 L8,0.8 L13,5 L8,9 L8,6.5 Q5,6 4.5,9 Q5,12 8,12.5 L6,14.5 Q1,13 1.5,8 Z" fill="#50a8f0" stroke="#1858b0" stroke-width="0.9"/></g><g transform="translate(731,98.5)"><path d="M1,12 L12,1 L16,5 L5,16 Z" fill="#f0d040" stroke="#906808" stroke-width="1"/><path d="M4,11.5 L5.5,13 M6.5,9 L8,10.5 M9,6.5 L10.5,8 M11.5,4 L13,5.5" stroke="#906808" stroke-width="0.8"/></g><path d="M762.5,97 V116 M765.5,97 V116" stroke="#9a968e" stroke-width="1.4" stroke-dasharray="1.2 1.3"/><g transform="translate(772,98.5)"><path d="M1,7 H16 V15 H1 Z" fill="#30a048" stroke="#0c4018" stroke-width="1"/><circle cx="9" cy="5.5" r="4.8" fill="#2868d0" stroke="#102868" stroke-width="0.9"/><rect x="8.2" y="3" width="1.8" height="5" fill="#fff"/><rect x="3" y="10" width="5" height="3" fill="#c8f0c8"/></g><g transform="translate(796,99.5)"><rect x="0.5" y="0.5" width="13.5" height="13.5" fill="#a8e060" stroke="#206010" stroke-width="1.2"/><path d="M7.2,0.5 V14 M0.5,7.2 H14" stroke="#206010" stroke-width="1.4"/><rect x="2.8" y="2.8" width="2.4" height="2.4" fill="#d82010"/><rect x="9.3" y="2.8" width="2.4" height="2.4" fill="#d82010"/><rect x="2.8" y="9.3" width="2.4" height="2.4" fill="#d82010"/><rect x="9.3" y="9.3" width="2.4" height="2.4" fill="#d82010"/></g><g transform="translate(818.5,99.5)"><path d="M5,0.5 H9 V5 H13.5 V9 H9 V13.5 H5 V9 H0.5 V5 H5 Z" fill="#20a840" stroke="#083c18" stroke-width="1.1"/><rect x="5.5" y="5.5" width="3" height="3" fill="#103c90"/></g><g transform="translate(842,99.5)"><rect x="0.6" y="0.6" width="14" height="13.5" fill="#fff" stroke="#283890" stroke-width="1.2"/><path d="M0.6,4.5 H14.6 M0.6,9 H14.6 M5,0.6 V14 M10,0.6 V14" stroke="#8890c0" stroke-width="0.8"/><rect x="0.6" y="0.6" width="14" height="2.6" fill="#283890"/><path d="M7,10 L9.5,12.5 L14,7.5" stroke="#1848c0" stroke-width="2" fill="none"/></g><g transform="translate(864,98.5)"><path d="M2,1 V5 Q2,7 4,7 V15 H6.5 V7 Q8.5,7 8.5,5 V1 H7 V4.5 H3.5 V1 Z" fill="#f4f4f4" stroke="#202020" stroke-width="1"/><path d="M11,1 H15.5 V7 H11 Z" fill="#f0a020" stroke="#202020" stroke-width="1"/><path d="M12,7 H14.5 V15 Q13.2,16.5 12,15 Z" fill="#f8e048" stroke="#202020" stroke-width="1"/></g></svg>
<div class="a " style="left:1176px;top:120px;width:183px;height:21px;background:#d4d0c8;box-shadow:inset 1px 1px 0 #fff,inset -1px -1px 0 #808080;"></div>
<div class="a t" style="left:1177.2px;top:120px;font-size:12.5px;letter-spacing:-0.45px;transform:scaleX(0.932);transform-origin:0 50%;color:#202020;">Selected</div>
<svg class="a" style="left:0;top:0" width="1" height="1"><path d="M1344.5,126.5 L1351.5,133.5 M1351.5,126.5 L1344.5,133.5" stroke="#303030" stroke-width="1.2"/></svg>
<div class="a sunk" style="left:1184px;top:150px;width:168px;height:415px;background:#c9e9cd;"></div>
<svg class="a" style="left:0;top:0" width="1440" height="600"><path d="M1196.5,162 V565" stroke="#8a9a8c" stroke-width="1" stroke-dasharray="1 1.5"/><path d="M1201,163.4 H1208" stroke="#8a9a8c" stroke-width="1" stroke-dasharray="1 1.5"/><rect x="1192.5" y="159.3" width="8.2" height="8.2" fill="#c6e6ca" stroke="#70806f" stroke-width="1"/><path d="M1194.3,163.4 H1199 M1196.6,161.0 V165.8" stroke="#000" stroke-width="1.4"/><g transform="translate(1208.6,154.4)"><rect x="0" y="0" width="16.5" height="15.6" fill="#f2f8f4"/><polygon points="2.1,6.9 8.3,1.9 12.9,2.3 16,5.2 15.4,8.1 9.6,10.2 2.1,8.1" fill="#b0aeb8"/><path d="M0.8,8.4 L5,8.8 L9.6,11 L15.8,6.6" stroke="#0c0c28" stroke-width="2.2" fill="none"/><path d="M1.3,8.6 V12.6 M9.7,11 V15 M12.9,9.4 V13 M15.6,6.8 V10.6 M5.2,9 V10.5" stroke="#181890" stroke-width="1.4"/></g><path d="M1201,185.4 H1208" stroke="#8a9a8c" stroke-width="1" stroke-dasharray="1 1.5"/><rect x="1192.5" y="181.3" width="8.2" height="8.2" fill="#c6e6ca" stroke="#70806f" stroke-width="1"/><path d="M1194.3,185.4 H1199 M1196.6,183.1 V187.8" stroke="#000" stroke-width="1.4"/><g transform="translate(1208.6,176.4)"><rect x="0" y="0" width="16.5" height="15.6" fill="#f2f8f4"/><polygon points="2.1,6.9 8.3,1.9 12.9,2.3 16,5.2 15.4,8.1 9.6,10.2 2.1,8.1" fill="#b0aeb8"/><path d="M0.8,8.4 L5,8.8 L9.6,11 L15.8,6.6" stroke="#0c0c28" stroke-width="2.2" fill="none"/><path d="M1.3,8.6 V12.6 M9.7,11 V15 M12.9,9.4 V13 M15.6,6.8 V10.6 M5.2,9 V10.5" stroke="#181890" stroke-width="1.4"/></g><path d="M1201,207.5 H1208" stroke="#8a9a8c" stroke-width="1" stroke-dasharray="1 1.5"/><rect x="1192.5" y="203.4" width="8.2" height="8.2" fill="#c6e6ca" stroke="#70806f" stroke-width="1"/><path d="M1194.3,207.5 H1199 M1196.6,205.1 V209.9" stroke="#000" stroke-width="1.4"/><g transform="translate(1208.6,198.5)"><rect x="0" y="0" width="16.5" height="15.6" fill="#f2f8f4"/><polygon points="2.1,6.9 8.3,1.9 12.9,2.3 16,5.2 15.4,8.1 9.6,10.2 2.1,8.1" fill="#b0aeb8"/><path d="M0.8,8.4 L5,8.8 L9.6,11 L15.8,6.6" stroke="#0c0c28" stroke-width="2.2" fill="none"/><path d="M1.3,8.6 V12.6 M9.7,11 V15 M12.9,9.4 V13 M15.6,6.8 V10.6 M5.2,9 V10.5" stroke="#181890" stroke-width="1.4"/></g><path d="M1201,229.5 H1208" stroke="#8a9a8c" stroke-width="1" stroke-dasharray="1 1.5"/><rect x="1192.5" y="225.4" width="8.2" height="8.2" fill="#c6e6ca" stroke="#70806f" stroke-width="1"/><path d="M1194.3,229.5 H1199 M1196.6,227.2 V231.9" stroke="#000" stroke-width="1.4"/><g transform="translate(1208.6,220.5)"><rect x="0" y="0" width="16.5" height="15.6" fill="#f2f8f4"/><polygon points="2.1,6.9 8.3,1.9 12.9,2.3 16,5.2 15.4,8.1 9.6,10.2 2.1,8.1" fill="#b0aeb8"/><path d="M0.8,8.4 L5,8.8 L9.6,11 L15.8,6.6" stroke="#0c0c28" stroke-width="2.2" fill="none"/><path d="M1.3,8.6 V12.6 M9.7,11 V15 M12.9,9.4 V13 M15.6,6.8 V10.6 M5.2,9 V10.5" stroke="#181890" stroke-width="1.4"/></g></svg>
<div class="a t" style="left:1228.7px;top:152px;font-size:16.5px;letter-spacing:-0.28px;color:#303830;">V200_Array 4</div>
<div class="a t" style="left:1228.7px;top:174px;font-size:16.5px;letter-spacing:-0.36px;color:#303830;">R208_Array 4</div>
<div class="a t" style="left:1228.7px;top:196px;font-size:16.5px;letter-spacing:-0.36px;color:#303830;">R345_Array 4</div>
<div class="a t" style="left:1228.7px;top:218px;font-size:16.5px;letter-spacing:-0.36px;color:#303830;">R346_Array 4</div>
<div class="a t" style="left:1228.7px;top:240px;font-size:16.5px;letter-spacing:-0.36px;color:#303830;">C407_Array 4</div>
<div class="a t" style="left:1228.7px;top:262px;font-size:16.5px;letter-spacing:-0.36px;color:#303830;">C418_Array 4</div>
<div class="a t" style="left:1228.7px;top:284px;font-size:16.5px;letter-spacing:-0.36px;color:#303830;">C422_Array 4</div>
<div class="a t" style="left:1228.7px;top:306px;font-size:16.5px;letter-spacing:-0.36px;color:#303830;">C431_Array 4</div>
<div class="a t" style="left:1228.7px;top:328px;font-size:16.5px;letter-spacing:-0.36px;color:#303830;">R313_Array 4</div>
<div class="a t" style="left:1228.7px;top:350px;font-size:16.5px;letter-spacing:-0.36px;color:#303830;">R315_Array 4</div>
<div class="a t" style="left:1228.7px;top:372px;font-size:16.5px;letter-spacing:-0.36px;color:#303830;">R341_Array 4</div>
<div class="a t" style="left:1228.7px;top:395px;font-size:16.5px;letter-spacing:-0.36px;color:#303830;">R342_Array 4</div>
<div class="a t" style="left:1228.7px;top:417px;font-size:16.5px;letter-spacing:-0.36px;color:#303830;">R343_Array 4</div>
<div class="a t" style="left:1228.7px;top:439px;font-size:16.5px;letter-spacing:-0.36px;color:#303830;">R216_Array 4</div>
<div class="a t" style="left:1228.7px;top:461px;font-size:16.5px;letter-spacing:-0.36px;color:#303830;">C404_Array 4</div>
<div class="a t" style="left:1228.7px;top:483px;font-size:16.5px;letter-spacing:-0.36px;color:#303830;">C405_Array 4</div>
<div class="a t" style="left:1228.7px;top:505px;font-size:16.5px;letter-spacing:-0.36px;color:#303830;">C419_Array 4</div>
<div class="a t" style="left:1228.7px;top:527px;font-size:16.5px;letter-spacing:-0.36px;color:#303830;">C421_Array 4</div>
<div class="a dith" style="left:1186px;top:540px;width:141px;height:23px;"></div>
<div class="a sb" style="left:1186px;top:540px;width:100px;height:23px;"></div>
<div class="a sb" style="left:1303px;top:540px;width:24px;height:23px;"></div>
<svg class="a" style="left:0;top:0" width="1" height="1"><polygon points="1311.588,545.8 1311.588,556.2 1317.412,551.0" fill="#000"/></svg>
<div class="a face" style="left:1327px;top:540px;width:24px;height:23px;"></div>
<div class="a dith" style="left:1327px;top:152px;width:24px;height:388px;"></div>
<div class="a sb" style="left:1327px;top:152px;width:24px;height:22px;"></div>
<svg class="a" style="left:0;top:0" width="1" height="1"><polygon points="1333.3,165.412 1343.7,165.412 1338.5,159.588" fill="#000"/></svg>
<div class="a sb" style="left:1327px;top:174px;width:24px;height:36px;"></div>
<div class="a sb" style="left:1327px;top:517px;width:24px;height:22px;"></div>
<svg class="a" style="left:0;top:0" width="1" height="1"><polygon points="1333.3,524.588 1343.7,524.588 1338.5,530.412" fill="#000"/></svg>
<div class="a " style="left:1184px;top:563px;width:168px;height:2px;background:#f4f4f0;"></div>
<div class="a " style="left:1280px;top:577px;width:80px;height:31px;background:#c9e9cd;"></div>
<div class="a " style="left:1280px;top:577px;width:80px;height:2px;background:#e8f4e8;"></div>
<div class="a " style="left:1284.5px;top:583px;width:1.5px;height:21px;background:#6f8a74;"></div>
<div class="a " style="left:1319.5px;top:583px;width:1.5px;height:21px;background:#6f8a74;"></div>
<div class="a " style="left:1354.5px;top:583px;width:1.5px;height:21px;background:#6f8a74;"></div>
<div class="a t" style="left:1287.2px;top:583px;font-size:18px;letter-spacing:-0.45px;transform:scaleX(0.992);transform-origin:0 50%;color:#6a8670;">C...</div>
<div class="a t" style="left:1321.7px;top:583px;font-size:18px;letter-spacing:0.08px;color:#6a8670;">P...</div>
<div class="a " style="left:1176px;top:611px;width:183px;height:20px;background:#d4d0c8;box-shadow:inset 1px 1px 0 #fff,inset -1px -1px 0 #808080;"></div>
<svg class="a" style="left:0;top:0" width="1" height="1"><path d="M1344.5,617 L1351.5,624 M1351.5,617 L1344.5,624" stroke="#303030" stroke-width="1.2"/></svg>
<div class="a " style="left:1182px;top:638px;width:169px;height:291px;background:#00507a;"></div>
<div class="a " style="left:1182px;top:749px;width:169px;height:113px;background:#000;"></div>
<svg class="a" style="left:0;top:0" width="1440" height="940"><rect x="1293.5" y="795.5" width="38.5" height="31" fill="#3a3a50" stroke="#c8c4e8" stroke-width="1.2"/><rect x="1289.2" y="829.7" width="1.4" height="1.4" fill="#30d8d0"/><rect x="1285.5" y="810.9" width="1.4" height="1.4" fill="#30d8d0"/><rect x="1306.0" y="811.4" width="1.4" height="1.4" fill="#30d8d0"/><rect x="1333.4" y="832.7" width="1.4" height="1.4" fill="#30d8d0"/><rect x="1293.2" y="823.4" width="1.4" height="1.4" fill="#30d8d0"/><rect x="1331.7" y="817.4" width="1.4" height="1.4" fill="#30d8d0"/><rect x="1332.5" y="814.5" width="1.4" height="1.4" fill="#30d8d0"/><rect x="1332.2" y="814.9" width="1.4" height="1.4" fill="#30d8d0"/><rect x="1327.7" y="832.2" width="1.4" height="1.4" fill="#30d8d0"/><rect x="1289.8" y="812.0" width="1.4" height="1.4" fill="#30d8d0"/><rect x="1312.4" y="816.9" width="1.4" height="1.4" fill="#30d8d0"/><rect x="1306.8" y="813.6" width="1.4" height="1.4" fill="#30d8d0"/><rect x="1334.0" y="823.8" width="1.4" height="1.4" fill="#30d8d0"/><rect x="1334.5" y="821.9" width="1.4" height="1.4" fill="#30d8d0"/><rect x="1306.0" y="821.4" width="1.4" height="1.4" fill="#30d8d0"/><rect x="1334.6" y="823.9" width="1.4" height="1.4" fill="#30d8d0"/><rect x="1334.9" y="818.3" width="1.4" height="1.4" fill="#30d8d0"/><rect x="1310.3" y="811.4" width="1.4" height="1.4" fill="#30d8d0"/><rect x="1306.9" y="832.0" width="1.4" height="1.4" fill="#30d8d0"/><rect x="1307.5" y="831.2" width="1.4" height="1.4" fill="#30d8d0"/><rect x="1318.0" y="833.7" width="1.4" height="1.4" fill="#30d8d0"/><rect x="1294.9" y="814.2" width="1.4" height="1.4" fill="#30d8d0"/><rect x="1330.7" y="814.4" width="1.4" height="1.4" fill="#30d8d0"/><rect x="1331.6" y="823.6" width="1.4" height="1.4" fill="#30d8d0"/><rect x="1331.3" y="825.7" width="1.4" height="1.4" fill="#30d8d0"/><rect x="1337.7" y="829.1" width="1.4" height="1.4" fill="#30d8d0"/><rect x="1323.9" y="819.6" width="1.4" height="1.4" fill="#30d8d0"/><rect x="1287.0" y="818.2" width="1.4" height="1.4" fill="#30d8d0"/><rect x="1284.8" y="832.8" width="1.4" height="1.4" fill="#30d8d0"/><rect x="1306.1" y="813.6" width="1.4" height="1.4" fill="#30d8d0"/><rect x="1288.0" y="812.8" width="1.4" height="1.4" fill="#30d8d0"/><rect x="1319.7" y="812.1" width="1.4" height="1.4" fill="#30d8d0"/><rect x="1326.8" y="813.9" width="1.4" height="1.4" fill="#30d8d0"/><rect x="1284.4" y="826.6" width="1.4" height="1.4" fill="#30d8d0"/><rect x="1327.4" y="830.7" width="1.4" height="1.4" fill="#30d8d0"/><rect x="1295.1" y="818.5" width="1.4" height="1.4" fill="#30d8d0"/><rect x="1331.0" y="815.4" width="1.4" height="1.4" fill="#30d8d0"/><rect x="1297.0" y="829.6" width="1.4" height="1.4" fill="#30d8d0"/><rect x="1308.4" y="827.5" width="1.4" height="1.4" fill="#30d8d0"/><rect x="1299.8" y="826.6" width="1.4" height="1.4" fill="#30d8d0"/><rect x="1311.7" y="832.9" width="1.4" height="1.4" fill="#30d8d0"/><rect x="1289.8" y="818.1" width="1.4" height="1.4" fill="#30d8d0"/><rect x="1291.7" y="821.5" width="1.4" height="1.4" fill="#30d8d0"/><rect x="1323.5" y="812.9" width="1.4" height="1.4" fill="#30d8d0"/><rect x="1290.2" y="820.4" width="1.4" height="1.4" fill="#30d8d0"/><rect x="1339.0" y="819.5" width="1.4" height="1.4" fill="#30d8d0"/><rect x="1290.4" y="833.8" width="1.4" height="1.4" fill="#30d8d0"/><rect x="1330.4" y="813.5" width="1.4" height="1.4" fill="#30d8d0"/><rect x="1319.7" y="813.7" width="1.4" height="1.4" fill="#30d8d0"/><rect x="1336.4" y="825.6" width="1.4" height="1.4" fill="#30d8d0"/><rect x="1292.4" y="829.8" width="1.4" height="1.4" fill="#30d8d0"/><rect x="1287.4" y="828.3" width="1.4" height="1.4" fill="#30d8d0"/><rect x="1289.2" y="831.8" width="1.4" height="1.4" fill="#30d8d0"/><rect x="1332.5" y="820.1" width="1.4" height="1.4" fill="#30d8d0"/><rect x="1331.6" y="822.3" width="1.4" height="1.4" fill="#30d8d0"/><rect x="1298.0" y="814.1" width="1.4" height="1.4" fill="#30d8d0"/><rect x="1315.9" y="826.4" width="1.4" height="1.4" fill="#30d8d0"/><rect x="1336.0" y="811.4" width="1.4" height="1.4" fill="#30d8d0"/><rect x="1305.6" y="823.5" width="1.4" height="1.4" fill="#30d8d0"/><rect x="1330.0" y="833.4" width="1.4" height="1.4" fill="#30d8d0"/><rect x="1327.0" y="822.8" width="1.4" height="1.4" fill="#30d8d0"/><rect x="1319.1" y="832.1" width="1.4" height="1.4" fill="#30d8d0"/><rect x="1308.0" y="812.9" width="1.4" height="1.4" fill="#30d8d0"/><rect x="1291.1" y="815.1" width="1.4" height="1.4" fill="#30d8d0"/><rect x="1336.0" y="825.4" width="1.4" height="1.4" fill="#30d8d0"/><rect x="1308.8" y="815.3" width="1.4" height="1.4" fill="#30d8d0"/><rect x="1330.8" y="830.0" width="1.4" height="1.4" fill="#30d8d0"/><rect x="1311.5" y="820.1" width="1.4" height="1.4" fill="#30d8d0"/><rect x="1306.4" y="823.3" width="1.4" height="1.4" fill="#30d8d0"/><rect x="1328.0" y="817.1" width="1.4" height="1.4" fill="#30d8d0"/><rect x="1310" y="818" width="5" height="7" fill="none" stroke="#30d8d0" stroke-width="1"/><path d="M1188,851.5 H1194 M1339,851.5 H1346" stroke="#b8e8a0" stroke-width="1.2"/><rect x="1192" y="855.5" width="1.3" height="1.5" fill="#c8e8c0"/><rect x="1208" y="855.5" width="1.3" height="1.5" fill="#c8e8c0"/><rect x="1222" y="855.5" width="1.3" height="1.5" fill="#c8e8c0"/><rect x="1237" y="855.5" width="1.3" height="1.5" fill="#c8e8c0"/><rect x="1240" y="855.5" width="1.3" height="1.5" fill="#c8e8c0"/><rect x="1254" y="855.5" width="1.3" height="1.5" fill="#c8e8c0"/><rect x="1257" y="855.5" width="1.3" height="1.5" fill="#c8e8c0"/><rect x="1266" y="855.5" width="1.3" height="1.5" fill="#c8e8c0"/><rect x="1271" y="855.5" width="1.3" height="1.5" fill="#c8e8c0"/><rect x="1279" y="855.5" width="1.3" height="1.5" fill="#c8e8c0"/><rect x="1293" y="855.5" width="1.3" height="1.5" fill="#c8e8c0"/><rect x="1309" y="855.5" width="1.3" height="1.5" fill="#c8e8c0"/><path d="M1266.5,853 V858 M1279.5,853 V858" stroke="#c8e8c0" stroke-width="1"/></svg>
<div class="a win" style="left:158px;top:243px;width:1123px;height:602px;"></div>
<div class="a " style="left:161px;top:247px;width:1116px;height:19px;background:linear-gradient(90deg,#808080 0%,#c0c0c0 100%);"></div>
<div class="a mono" style="left:164px;top:246.5px;font-size:16.67px;line-height:21px;color:#dedad2;font-weight:bold;">Tolerance Manager</div>
<div class="a btn" style="left:1260.5px;top:248.5px;width:15.5px;height:15px;"></div>
<svg class="a" style="left:0;top:0" width="1" height="1"><path d="M1264.25,252.0 L1271.25,259.0 M1271.25,252.0 L1264.25,259.0" stroke="#000" stroke-width="2.2" fill="none"/></svg>
<div class="a sunk" style="left:178px;top:285px;width:174px;height:494px;background:#c9e9cd;"></div>
<div class="a face" style="left:184px;top:311px;width:106.5px;height:460px;"></div>
<div class="a dith" style="left:328px;top:311px;width:22px;height:465px;"></div>
<div class="a hd" style="left:180px;top:287px;width:91px;height:24px;"></div>
<div class="a hd" style="left:271px;top:287px;width:20px;height:24px;"></div>
<div class="a hd" style="left:291px;top:287px;width:37px;height:24px;"></div>
<div class="a " style="left:180px;top:310px;width:148px;height:1.5px;background:#404040;"></div>
<div class="a sb" style="left:328px;top:287px;width:22px;height:23px;"></div>
<svg class="a" style="left:0;top:0" width="1" height="1"><polygon points="333.3,300.912 343.7,300.912 338.5,295.088" fill="#000"/></svg>
<div class="a sb" style="left:328px;top:692px;width:22px;height:62px;"></div>
<div class="a sb" style="left:328px;top:755px;width:22px;height:22px;"></div>
<svg class="a" style="left:0;top:0" width="1" height="1"><polygon points="333.3,762.588 343.7,762.588 338.5,768.412" fill="#000"/></svg>
<div class="a t" style="left:183.7px;top:291px;font-size:17px;letter-spacing:-0.05px;color:#4a4a4a;">Compon...</div>
<div class="a t" style="left:183.7px;top:312px;font-size:17px;letter-spacing:-0.09px;color:#4a4a4a;">C407_Arr...</div>
<div class="a t" style="left:183.7px;top:332px;font-size:17px;letter-spacing:-0.09px;color:#4a4a4a;">C418_Arr...</div>
<div class="a t" style="left:183.7px;top:352px;font-size:17px;letter-spacing:-0.09px;color:#4a4a4a;">C422_Arr...</div>
<div class="a t" style="left:183.7px;top:372px;font-size:17px;letter-spacing:-0.09px;color:#4a4a4a;">C431_Arr...</div>
<div class="a t" style="left:183.7px;top:392px;font-size:17px;letter-spacing:-0.09px;color:#4a4a4a;">R313_Arr...</div>
<div class="a t" style="left:183.7px;top:412px;font-size:17px;letter-spacing:-0.09px;color:#4a4a4a;">R315_Arr...</div>
<div class="a t" style="left:183.7px;top:433px;font-size:17px;letter-spacing:-0.09px;color:#4a4a4a;">R341_Arr...</div>
<div class="a t" style="left:183.7px;top:453px;font-size:17px;letter-spacing:-0.09px;color:#4a4a4a;">R342_Arr...</div>
<div class="a t" style="left:183.7px;top:473px;font-size:17px;letter-spacing:-0.09px;color:#4a4a4a;">R343_Arr...</div>
<div class="a t" style="left:183.7px;top:493px;font-size:17px;letter-spacing:-0.09px;color:#4a4a4a;">R216_Arr...</div>
<div class="a t" style="left:183.7px;top:513px;font-size:17px;letter-spacing:-0.09px;color:#4a4a4a;">C404_Arr...</div>
<div class="a t" style="left:183.7px;top:533px;font-size:17px;letter-spacing:-0.09px;color:#4a4a4a;">C405_Arr...</div>
<div class="a t" style="left:183.7px;top:553px;font-size:17px;letter-spacing:-0.09px;color:#4a4a4a;">C419_Arr...</div>
<div class="a t" style="left:183.7px;top:573px;font-size:17px;letter-spacing:-0.09px;color:#4a4a4a;">C421_Arr...</div>
<div class="a t" style="left:183.7px;top:593px;font-size:17px;letter-spacing:-0.09px;color:#4a4a4a;">C222_Arr...</div>
<div class="a t" style="left:183.7px;top:613px;font-size:17px;letter-spacing:-0.09px;color:#4a4a4a;">C700_Arr...</div>
<div class="a t" style="left:183.7px;top:633px;font-size:17px;letter-spacing:-0.09px;color:#4a4a4a;">C712_Arr...</div>
<div class="a t" style="left:183.7px;top:653px;font-size:17px;letter-spacing:-0.09px;color:#4a4a4a;">C123_Arr...</div>
<div class="a t" style="left:183.7px;top:673px;font-size:17px;letter-spacing:0.03px;color:#4a4a4a;">C211_Arr...</div>
<div class="a t" style="left:183.7px;top:693px;font-size:17px;letter-spacing:-0.09px;color:#4a4a4a;">C402_Arr...</div>
<div class="a t" style="left:183.7px;top:713px;font-size:17px;letter-spacing:-0.09px;color:#4a4a4a;">C406_Arr...</div>
<div class="a t" style="left:183.7px;top:733px;font-size:17px;letter-spacing:-0.09px;color:#4a4a4a;">C416_Arr...</div>
<div class="a t" style="left:183.7px;top:753px;font-size:17px;letter-spacing:-0.09px;color:#4a4a4a;">C420_Arr...</div>
<div class="a sunk" style="left:360px;top:285px;width:901px;height:495px;background:#c9e9cd;"></div>
<div class="a face" style="left:366px;top:311px;width:870px;height:440px;"></div>
<div class="a dith" style="left:1237px;top:311px;width:22px;height:445px;"></div>
<div class="a hd" style="left:362px;top:287px;width:79px;height:24px;"></div>
<div class="a hd" style="left:441px;top:287px;width:20px;height:24px;"></div>
<div class="a hd" style="left:461px;top:287px;width:35px;height:24px;"></div>
<div class="a hd" style="left:496px;top:287px;width:45px;height:24px;"></div>
<div class="a hd" style="left:541px;top:287px;width:45px;height:24px;"></div>
<div class="a hd" style="left:586px;top:287px;width:45px;height:24px;"></div>
<div class="a hd" style="left:631px;top:287px;width:45px;height:24px;"></div>
<div class="a hd" style="left:676px;top:287px;width:45px;height:24px;"></div>
<div class="a hd" style="left:721px;top:287px;width:45px;height:24px;"></div>
<div class="a hd" style="left:766px;top:287px;width:45px;height:24px;"></div>
<div class="a hd" style="left:811px;top:287px;width:45px;height:24px;"></div>
<div class="a hd" style="left:856px;top:287px;width:45px;height:24px;"></div>
<div class="a hd" style="left:901px;top:287px;width:45px;height:24px;"></div>
<div class="a hd" style="left:946px;top:287px;width:45px;height:24px;"></div>
<div class="a hd" style="left:991px;top:287px;width:45px;height:24px;"></div>
<div class="a hd" style="left:1036px;top:287px;width:45px;height:24px;"></div>
<div class="a hd" style="left:1081px;top:287px;width:45px;height:24px;"></div>
<div class="a hd" style="left:1126px;top:287px;width:45px;height:24px;"></div>
<div class="a hd" style="left:1171px;top:287px;width:45px;height:24px;"></div>
<div class="a hd" style="left:1216px;top:287px;width:21px;height:24px;"></div>
<div class="a " style="left:362px;top:310px;width:875px;height:1.5px;background:#404040;"></div>
<div class="a sb" style="left:1237px;top:287px;width:22px;height:23px;"></div>
<svg class="a" style="left:0;top:0" width="1" height="1"><polygon points="1242.3,300.912 1252.7,300.912 1247.5,295.088" fill="#000"/></svg>
<div class="a sb" style="left:1237px;top:718px;width:22px;height:14px;"></div>
<div class="a sb" style="left:1237px;top:732px;width:22px;height:23px;"></div>
<svg class="a" style="left:0;top:0" width="1" height="1"><polygon points="1242.3,740.088 1252.7,740.088 1247.5,745.912" fill="#000"/></svg>
<div class="a t" style="left:365.7px;top:291px;font-size:17px;letter-spacing:-0.45px;transform:scaleX(0.989);transform-origin:0 50%;color:#4a4a4a;">CompID</div>
<div class="a t" style="left:465.7px;top:291px;font-size:17px;letter-spacing:-0.45px;transform:scaleX(0.937);transform-origin:0 50%;color:#4a4a4a;">I...</div>
<div class="a t" style="left:951.2px;top:291px;font-size:17px;letter-spacing:-0.03px;color:#4a4a4a;">H ...</div>
<div class="a t" style="left:996.2px;top:291px;font-size:17px;letter-spacing:0.34px;color:#4a4a4a;">A ...</div>
<div class="a t" style="left:1041.2px;top:291px;font-size:17px;letter-spacing:0.34px;color:#4a4a4a;">A ...</div>
<div class="a t" style="left:1086.2px;top:291px;font-size:17px;letter-spacing:0.16px;color:#4a4a4a;">V ...</div>
<div class="a t" style="left:1131.2px;top:291px;font-size:17px;letter-spacing:0.16px;color:#4a4a4a;">V ...</div>
<div class="a t" style="left:1176.2px;top:291px;font-size:17px;letter-spacing:-0.11px;color:#4a4a4a;">H...</div>
<div class="a t" style="left:1221.2px;top:291px;font-size:17px;letter-spacing:-0.75px;color:#4a4a4a;">O</div>
<div class="a t" style="left:365.7px;top:312px;font-size:17px;letter-spacing:-0.18px;color:#4a4a4a;">C419_A...</div>
<div class="a t" style="left:472.0px;top:312px;font-size:17px;letter-spacing:-0.70px;color:#4a4a4a;">0</div>
<div class="a t" style="left:967.4px;top:312px;font-size:17px;letter-spacing:-0.80px;color:#4a4a4a;">50</div>
<div class="a t" style="left:1003.7px;top:312px;font-size:17px;letter-spacing:-0.80px;color:#4a4a4a;">150</div>
<div class="a t" style="left:1057.4px;top:312px;font-size:17px;letter-spacing:-0.80px;color:#4a4a4a;">50</div>
<div class="a t" style="left:1093.7px;top:312px;font-size:17px;letter-spacing:-0.80px;color:#4a4a4a;">150</div>
<div class="a t" style="left:1147.4px;top:312px;font-size:17px;letter-spacing:-0.80px;color:#4a4a4a;">50</div>
<div class="a t" style="left:1192.4px;top:312px;font-size:17px;letter-spacing:-0.80px;color:#4a4a4a;">20</div>
<div class="a t" style="left:1220.7px;top:312px;font-size:17px;letter-spacing:-0.80px;color:#4a4a4a;">0.</div>
<div class="a t" style="left:365.7px;top:332px;font-size:17px;letter-spacing:-0.18px;color:#4a4a4a;">C419_A...</div>
<div class="a t" style="left:472.0px;top:332px;font-size:17px;letter-spacing:-0.70px;color:#4a4a4a;">1</div>
<div class="a t" style="left:967.4px;top:332px;font-size:17px;letter-spacing:-0.80px;color:#4a4a4a;">50</div>
<div class="a t" style="left:1003.7px;top:332px;font-size:17px;letter-spacing:-0.80px;color:#4a4a4a;">150</div>
<div class="a t" style="left:1057.4px;top:332px;font-size:17px;letter-spacing:-0.80px;color:#4a4a4a;">50</div>
<div class="a t" style="left:1093.7px;top:332px;font-size:17px;letter-spacing:-0.80px;color:#4a4a4a;">150</div>
<div class="a t" style="left:1147.4px;top:332px;font-size:17px;letter-spacing:-0.80px;color:#4a4a4a;">50</div>
<div class="a t" style="left:1192.4px;top:332px;font-size:17px;letter-spacing:-0.80px;color:#4a4a4a;">20</div>
<div class="a t" style="left:1220.7px;top:332px;font-size:17px;letter-spacing:-0.80px;color:#4a4a4a;">0.</div>
<div class="a t" style="left:365.7px;top:352px;font-size:17px;letter-spacing:-0.18px;color:#4a4a4a;">C421_A...</div>
<div class="a t" style="left:472.0px;top:352px;font-size:17px;letter-spacing:-0.70px;color:#4a4a4a;">0</div>
<div class="a t" style="left:967.4px;top:352px;font-size:17px;letter-spacing:-0.80px;color:#4a4a4a;">50</div>
<div class="a t" style="left:1003.7px;top:352px;font-size:17px;letter-spacing:-0.80px;color:#4a4a4a;">150</div>
<div class="a t" style="left:1057.4px;top:352px;font-size:17px;letter-spacing:-0.80px;color:#4a4a4a;">50</div>
<div class="a t" style="left:1093.7px;top:352px;font-size:17px;letter-spacing:-0.80px;color:#4a4a4a;">150</div>
<div class="a t" style="left:1147.4px;top:352px;font-size:17px;letter-spacing:-0.80px;color:#4a4a4a;">50</div>
<div class="a t" style="left:1192.4px;top:352px;font-size:17px;letter-spacing:-0.80px;color:#4a4a4a;">20</div>
<div class="a t" style="left:1220.7px;top:352px;font-size:17px;letter-spacing:-0.80px;color:#4a4a4a;">0.</div>
<div class="a t" style="left:365.7px;top:372px;font-size:17px;letter-spacing:-0.18px;color:#4a4a4a;">C421_A...</div>
<div class="a t" style="left:472.0px;top:372px;font-size:17px;letter-spacing:-0.70px;color:#4a4a4a;">1</div>
<div class="a t" style="left:967.4px;top:372px;font-size:17px;letter-spacing:-0.80px;color:#4a4a4a;">50</div>
<div class="a t" style="left:1003.7px;top:372px;font-size:17px;letter-spacing:-0.80px;color:#4a4a4a;">150</div>
<div class="a t" style="left:1057.4px;top:372px;font-size:17px;letter-spacing:-0.80px;color:#4a4a4a;">50</div>
<div class="a t" style="left:1093.7px;top:372px;font-size:17px;letter-spacing:-0.80px;color:#4a4a4a;">150</div>
<div class="a t" style="left:1147.4px;top:372px;font-size:17px;letter-spacing:-0.80px;color:#4a4a4a;">50</div>
<div class="a t" style="left:1192.4px;top:372px;font-size:17px;letter-spacing:-0.80px;color:#4a4a4a;">20</div>
<div class="a t" style="left:1220.7px;top:372px;font-size:17px;letter-spacing:-0.80px;color:#4a4a4a;">0.</div>
<div class="a t" style="left:365.7px;top:392px;font-size:17px;letter-spacing:-0.18px;color:#4a4a4a;">C222_A...</div>
<div class="a t" style="left:472.0px;top:392px;font-size:17px;letter-spacing:-0.70px;color:#4a4a4a;">0</div>
<div class="a t" style="left:967.4px;top:392px;font-size:17px;letter-spacing:-0.80px;color:#4a4a4a;">50</div>
<div class="a t" style="left:1003.7px;top:392px;font-size:17px;letter-spacing:-0.80px;color:#4a4a4a;">150</div>
<div class="a t" style="left:1057.4px;top:392px;font-size:17px;letter-spacing:-0.80px;color:#4a4a4a;">50</div>
<div class="a t" style="left:1093.7px;top:392px;font-size:17px;letter-spacing:-0.80px;color:#4a4a4a;">150</div>
<div class="a t" style="left:1147.4px;top:392px;font-size:17px;letter-spacing:-0.80px;color:#4a4a4a;">50</div>
<div class="a t" style="left:1192.4px;top:392px;font-size:17px;letter-spacing:-0.80px;color:#4a4a4a;">20</div>
<div class="a t" style="left:1220.7px;top:392px;font-size:17px;letter-spacing:-0.80px;color:#4a4a4a;">0.</div>
<div class="a t" style="left:365.7px;top:412px;font-size:17px;letter-spacing:-0.18px;color:#4a4a4a;">C222_A...</div>
<div class="a t" style="left:472.0px;top:412px;font-size:17px;letter-spacing:-0.70px;color:#4a4a4a;">1</div>
<div class="a t" style="left:967.4px;top:412px;font-size:17px;letter-spacing:-0.80px;color:#4a4a4a;">50</div>
<div class="a t" style="left:1003.7px;top:412px;font-size:17px;letter-spacing:-0.80px;color:#4a4a4a;">150</div>
<div class="a t" style="left:1057.4px;top:412px;font-size:17px;letter-spacing:-0.80px;color:#4a4a4a;">50</div>
<div class="a t" style="left:1093.7px;top:412px;font-size:17px;letter-spacing:-0.80px;color:#4a4a4a;">150</div>
<div class="a t" style="left:1147.4px;top:412px;font-size:17px;letter-spacing:-0.80px;color:#4a4a4a;">50</div>
<div class="a t" style="left:1192.4px;top:412px;font-size:17px;letter-spacing:-0.80px;color:#4a4a4a;">20</div>
<div class="a t" style="left:1220.7px;top:412px;font-size:17px;letter-spacing:-0.80px;color:#4a4a4a;">0.</div>
<div class="a t" style="left:365.7px;top:433px;font-size:17px;letter-spacing:-0.18px;color:#4a4a4a;">C700_A...</div>
<div class="a t" style="left:472.0px;top:433px;font-size:17px;letter-spacing:-0.70px;color:#4a4a4a;">0</div>
<div class="a t" style="left:967.4px;top:433px;font-size:17px;letter-spacing:-0.80px;color:#4a4a4a;">50</div>
<div class="a t" style="left:1003.7px;top:433px;font-size:17px;letter-spacing:-0.80px;color:#4a4a4a;">150</div>
<div class="a t" style="left:1057.4px;top:433px;font-size:17px;letter-spacing:-0.80px;color:#4a4a4a;">50</div>
<div class="a t" style="left:1093.7px;top:433px;font-size:17px;letter-spacing:-0.80px;color:#4a4a4a;">150</div>
<div class="a t" style="left:1147.4px;top:433px;font-size:17px;letter-spacing:-0.80px;color:#4a4a4a;">50</div>
<div class="a t" style="left:1192.4px;top:433px;font-size:17px;letter-spacing:-0.80px;color:#4a4a4a;">20</div>
<div class="a t" style="left:1220.7px;top:433px;font-size:17px;letter-spacing:-0.80px;color:#4a4a4a;">0.</div>
<div class="a t" style="left:365.7px;top:453px;font-size:17px;letter-spacing:-0.18px;color:#4a4a4a;">C700_A...</div>
<div class="a t" style="left:472.0px;top:453px;font-size:17px;letter-spacing:-0.70px;color:#4a4a4a;">1</div>
<div class="a t" style="left:967.4px;top:453px;font-size:17px;letter-spacing:-0.80px;color:#4a4a4a;">50</div>
<div class="a t" style="left:1003.7px;top:453px;font-size:17px;letter-spacing:-0.80px;color:#4a4a4a;">150</div>
<div class="a t" style="left:1057.4px;top:453px;font-size:17px;letter-spacing:-0.80px;color:#4a4a4a;">50</div>
<div class="a t" style="left:1093.7px;top:453px;font-size:17px;letter-spacing:-0.80px;color:#4a4a4a;">150</div>
<div class="a t" style="left:1147.4px;top:453px;font-size:17px;letter-spacing:-0.80px;color:#4a4a4a;">50</div>
<div class="a t" style="left:1192.4px;top:453px;font-size:17px;letter-spacing:-0.80px;color:#4a4a4a;">20</div>
<div class="a t" style="left:1220.7px;top:453px;font-size:17px;letter-spacing:-0.80px;color:#4a4a4a;">0.</div>
<div class="a t" style="left:365.7px;top:473px;font-size:17px;letter-spacing:-0.18px;color:#4a4a4a;">C712_A...</div>
<div class="a t" style="left:472.0px;top:473px;font-size:17px;letter-spacing:-0.70px;color:#4a4a4a;">0</div>
<div class="a t" style="left:967.4px;top:473px;font-size:17px;letter-spacing:-0.80px;color:#4a4a4a;">50</div>
<div class="a t" style="left:1003.7px;top:473px;font-size:17px;letter-spacing:-0.80px;color:#4a4a4a;">150</div>
<div class="a t" style="left:1057.4px;top:473px;font-size:17px;letter-spacing:-0.80px;color:#4a4a4a;">50</div>
<div class="a t" style="left:1093.7px;top:473px;font-size:17px;letter-spacing:-0.80px;color:#4a4a4a;">150</div>
<div class="a t" style="left:1147.4px;top:473px;font-size:17px;letter-spacing:-0.80px;color:#4a4a4a;">50</div>
<div class="a t" style="left:1192.4px;top:473px;font-size:17px;letter-spacing:-0.80px;color:#4a4a4a;">20</div>
<div class="a t" style="left:1220.7px;top:473px;font-size:17px;letter-spacing:-0.80px;color:#4a4a4a;">0.</div>
<div class="a t" style="left:365.7px;top:493px;font-size:17px;letter-spacing:-0.18px;color:#4a4a4a;">C712_A...</div>
<div class="a t" style="left:472.0px;top:493px;font-size:17px;letter-spacing:-0.70px;color:#4a4a4a;">1</div>
<div class="a t" style="left:967.4px;top:493px;font-size:17px;letter-spacing:-0.80px;color:#4a4a4a;">50</div>
<div class="a t" style="left:1003.7px;top:493px;font-size:17px;letter-spacing:-0.80px;color:#4a4a4a;">150</div>
<div class="a t" style="left:1057.4px;top:493px;font-size:17px;letter-spacing:-0.80px;color:#4a4a4a;">50</div>
<div class="a t" style="left:1093.7px;top:493px;font-size:17px;letter-spacing:-0.80px;color:#4a4a4a;">150</div>
<div class="a t" style="left:1147.4px;top:493px;font-size:17px;letter-spacing:-0.80px;color:#4a4a4a;">50</div>
<div class="a t" style="left:1192.4px;top:493px;font-size:17px;letter-spacing:-0.80px;color:#4a4a4a;">20</div>
<div class="a t" style="left:1220.7px;top:493px;font-size:17px;letter-spacing:-0.80px;color:#4a4a4a;">0.</div>
<div class="a t" style="left:365.7px;top:513px;font-size:17px;letter-spacing:-0.18px;color:#4a4a4a;">C123_A...</div>
<div class="a t" style="left:472.0px;top:513px;font-size:17px;letter-spacing:-0.70px;color:#4a4a4a;">0</div>
<div class="a t" style="left:967.4px;top:513px;font-size:17px;letter-spacing:-0.80px;color:#4a4a4a;">50</div>
<div class="a t" style="left:1003.7px;top:513px;font-size:17px;letter-spacing:-0.80px;color:#4a4a4a;">150</div>
<div class="a t" style="left:1057.4px;top:513px;font-size:17px;letter-spacing:-0.80px;color:#4a4a4a;">50</div>
<div class="a t" style="left:1093.7px;top:513px;font-size:17px;letter-spacing:-0.80px;color:#4a4a4a;">150</div>
<div class="a t" style="left:1147.4px;top:513px;font-size:17px;letter-spacing:-0.80px;color:#4a4a4a;">50</div>
<div class="a t" style="left:1192.4px;top:513px;font-size:17px;letter-spacing:-0.80px;color:#4a4a4a;">20</div>
<div class="a t" style="left:1220.7px;top:513px;font-size:17px;letter-spacing:-0.80px;color:#4a4a4a;">0.</div>
<div class="a t" style="left:365.7px;top:533px;font-size:17px;letter-spacing:-0.18px;color:#4a4a4a;">C123_A...</div>
<div class="a t" style="left:472.0px;top:533px;font-size:17px;letter-spacing:-0.70px;color:#4a4a4a;">1</div>
<div class="a t" style="left:967.4px;top:533px;font-size:17px;letter-spacing:-0.80px;color:#4a4a4a;">50</div>
<div class="a t" style="left:1003.7px;top:533px;font-size:17px;letter-spacing:-0.80px;color:#4a4a4a;">150</div>
<div class="a t" style="left:1057.4px;top:533px;font-size:17px;letter-spacing:-0.80px;color:#4a4a4a;">50</div>
<div class="a t" style="left:1093.7px;top:533px;font-size:17px;letter-spacing:-0.80px;color:#4a4a4a;">150</div>
<div class="a t" style="left:1147.4px;top:533px;font-size:17px;letter-spacing:-0.80px;color:#4a4a4a;">50</div>
<div class="a t" style="left:1192.4px;top:533px;font-size:17px;letter-spacing:-0.80px;color:#4a4a4a;">20</div>
<div class="a t" style="left:1220.7px;top:533px;font-size:17px;letter-spacing:-0.80px;color:#4a4a4a;">0.</div>
<div class="a t" style="left:365.7px;top:553px;font-size:17px;letter-spacing:-0.04px;color:#4a4a4a;">C211_A...</div>
<div class="a t" style="left:472.0px;top:553px;font-size:17px;letter-spacing:-0.70px;color:#4a4a4a;">0</div>
<div class="a t" style="left:967.4px;top:553px;font-size:17px;letter-spacing:-0.80px;color:#4a4a4a;">50</div>
<div class="a t" style="left:1003.7px;top:553px;font-size:17px;letter-spacing:-0.80px;color:#4a4a4a;">150</div>
<div class="a t" style="left:1057.4px;top:553px;font-size:17px;letter-spacing:-0.80px;color:#4a4a4a;">50</div>
<div class="a t" style="left:1093.7px;top:553px;font-size:17px;letter-spacing:-0.80px;color:#4a4a4a;">150</div>
<div class="a t" style="left:1147.4px;top:553px;font-size:17px;letter-spacing:-0.80px;color:#4a4a4a;">50</div>
<div class="a t" style="left:1192.4px;top:553px;font-size:17px;letter-spacing:-0.80px;color:#4a4a4a;">20</div>
<div class="a t" style="left:1220.7px;top:553px;font-size:17px;letter-spacing:-0.80px;color:#4a4a4a;">0.</div>
<div class="a t" style="left:365.7px;top:573px;font-size:17px;letter-spacing:-0.04px;color:#4a4a4a;">C211_A...</div>
<div class="a t" style="left:472.0px;top:573px;font-size:17px;letter-spacing:-0.70px;color:#4a4a4a;">1</div>
<div class="a t" style="left:967.4px;top:573px;font-size:17px;letter-spacing:-0.80px;color:#4a4a4a;">50</div>
<div class="a t" style="left:1003.7px;top:573px;font-size:17px;letter-spacing:-0.80px;color:#4a4a4a;">150</div>
<div class="a t" style="left:1057.4px;top:573px;font-size:17px;letter-spacing:-0.80px;color:#4a4a4a;">50</div>
<div class="a t" style="left:1093.7px;top:573px;font-size:17px;letter-spacing:-0.80px;color:#4a4a4a;">150</div>
<div class="a t" style="left:1147.4px;top:573px;font-size:17px;letter-spacing:-0.80px;color:#4a4a4a;">50</div>
<div class="a t" style="left:1192.4px;top:573px;font-size:17px;letter-spacing:-0.80px;color:#4a4a4a;">20</div>
<div class="a t" style="left:1220.7px;top:573px;font-size:17px;letter-spacing:-0.80px;color:#4a4a4a;">0.</div>
<div class="a t" style="left:365.7px;top:593px;font-size:17px;letter-spacing:-0.18px;color:#4a4a4a;">C402_A...</div>
<div class="a t" style="left:472.0px;top:593px;font-size:17px;letter-spacing:-0.70px;color:#4a4a4a;">0</div>
<div class="a t" style="left:967.4px;top:593px;font-size:17px;letter-spacing:-0.80px;color:#4a4a4a;">50</div>
<div class="a t" style="left:1003.7px;top:593px;font-size:17px;letter-spacing:-0.80px;color:#4a4a4a;">150</div>
<div class="a t" style="left:1057.4px;top:593px;font-size:17px;letter-spacing:-0.80px;color:#4a4a4a;">50</div>
<div class="a t" style="left:1093.7px;top:593px;font-size:17px;letter-spacing:-0.80px;color:#4a4a4a;">150</div>
<div class="a t" style="left:1147.4px;top:593px;font-size:17px;letter-spacing:-0.80px;color:#4a4a4a;">50</div>
<div class="a t" style="left:1192.4px;top:593px;font-size:17px;letter-spacing:-0.80px;color:#4a4a4a;">20</div>
<div class="a t" style="left:1220.7px;top:593px;font-size:17px;letter-spacing:-0.80px;color:#4a4a4a;">0.</div>
<div class="a t" style="left:365.7px;top:613px;font-size:17px;letter-spacing:-0.18px;color:#4a4a4a;">C402_A...</div>
<div class="a t" style="left:472.0px;top:613px;font-size:17px;letter-spacing:-0.70px;color:#4a4a4a;">1</div>
<div class="a t" style="left:967.4px;top:613px;font-size:17px;letter-spacing:-0.80px;color:#4a4a4a;">50</div>
<div class="a t" style="left:1003.7px;top:613px;font-size:17px;letter-spacing:-0.80px;color:#4a4a4a;">150</div>
<div class="a t" style="left:1057.4px;top:613px;font-size:17px;letter-spacing:-0.80px;color:#4a4a4a;">50</div>
<div class="a t" style="left:1093.7px;top:613px;font-size:17px;letter-spacing:-0.80px;color:#4a4a4a;">150</div>
<div class="a t" style="left:1147.4px;top:613px;font-size:17px;letter-spacing:-0.80px;color:#4a4a4a;">50</div>
<div class="a t" style="left:1192.4px;top:613px;font-size:17px;letter-spacing:-0.80px;color:#4a4a4a;">20</div>
<div class="a t" style="left:1220.7px;top:613px;font-size:17px;letter-spacing:-0.80px;color:#4a4a4a;">0.</div>
<div class="a t" style="left:365.7px;top:633px;font-size:17px;letter-spacing:-0.18px;color:#4a4a4a;">C406_A...</div>
<div class="a t" style="left:472.0px;top:633px;font-size:17px;letter-spacing:-0.70px;color:#4a4a4a;">0</div>
<div class="a t" style="left:967.4px;top:633px;font-size:17px;letter-spacing:-0.80px;color:#4a4a4a;">50</div>
<div class="a t" style="left:1003.7px;top:633px;font-size:17px;letter-spacing:-0.80px;color:#4a4a4a;">150</div>
<div class="a t" style="left:1057.4px;top:633px;font-size:17px;letter-spacing:-0.80px;color:#4a4a4a;">50</div>
<div class="a t" style="left:1093.7px;top:633px;font-size:17px;letter-spacing:-0.80px;color:#4a4a4a;">150</div>
<div class="a t" style="left:1147.4px;top:633px;font-size:17px;letter-spacing:-0.80px;color:#4a4a4a;">50</div>
<div class="a t" style="left:1192.4px;top:633px;font-size:17px;letter-spacing:-0.80px;color:#4a4a4a;">20</div>
<div class="a t" style="left:1220.7px;top:633px;font-size:17px;letter-spacing:-0.80px;color:#4a4a4a;">0.</div>
<div class="a t" style="left:365.7px;top:653px;font-size:17px;letter-spacing:-0.18px;color:#4a4a4a;">C406_A...</div>
<div class="a t" style="left:472.0px;top:653px;font-size:17px;letter-spacing:-0.70px;color:#4a4a4a;">1</div>
<div class="a t" style="left:967.4px;top:653px;font-size:17px;letter-spacing:-0.80px;color:#4a4a4a;">50</div>
<div class="a t" style="left:1003.7px;top:653px;font-size:17px;letter-spacing:-0.80px;color:#4a4a4a;">150</div>
<div class="a t" style="left:1057.4px;top:653px;font-size:17px;letter-spacing:-0.80px;color:#4a4a4a;">50</div>
<div class="a t" style="left:1093.7px;top:653px;font-size:17px;letter-spacing:-0.80px;color:#4a4a4a;">150</div>
<div class="a t" style="left:1147.4px;top:653px;font-size:17px;letter-spacing:-0.80px;color:#4a4a4a;">50</div>
<div class="a t" style="left:1192.4px;top:653px;font-size:17px;letter-spacing:-0.80px;color:#4a4a4a;">20</div>
<div class="a t" style="left:1220.7px;top:653px;font-size:17px;letter-spacing:-0.80px;color:#4a4a4a;">0.</div>
<div class="a t" style="left:365.7px;top:673px;font-size:17px;letter-spacing:-0.18px;color:#4a4a4a;">C416_A...</div>
<div class="a t" style="left:472.0px;top:673px;font-size:17px;letter-spacing:-0.70px;color:#4a4a4a;">0</div>
<div class="a t" style="left:967.4px;top:673px;font-size:17px;letter-spacing:-0.80px;color:#4a4a4a;">50</div>
<div class="a t" style="left:1003.7px;top:673px;font-size:17px;letter-spacing:-0.80px;color:#4a4a4a;">150</div>
<div class="a t" style="left:1057.4px;top:673px;font-size:17px;letter-spacing:-0.80px;color:#4a4a4a;">50</div>
<div class="a t" style="left:1093.7px;top:673px;font-size:17px;letter-spacing:-0.80px;color:#4a4a4a;">150</div>
<div class="a t" style="left:1147.4px;top:673px;font-size:17px;letter-spacing:-0.80px;color:#4a4a4a;">50</div>
<div class="a t" style="left:1192.4px;top:673px;font-size:17px;letter-spacing:-0.80px;color:#4a4a4a;">20</div>
<div class="a t" style="left:1220.7px;top:673px;font-size:17px;letter-spacing:-0.80px;color:#4a4a4a;">0.</div>
<div class="a t" style="left:365.7px;top:693px;font-size:17px;letter-spacing:-0.18px;color:#4a4a4a;">C416_A...</div>
<div class="a t" style="left:472.0px;top:693px;font-size:17px;letter-spacing:-0.70px;color:#4a4a4a;">1</div>
<div class="a t" style="left:967.4px;top:693px;font-size:17px;letter-spacing:-0.80px;color:#4a4a4a;">50</div>
<div class="a t" style="left:1003.7px;top:693px;font-size:17px;letter-spacing:-0.80px;color:#4a4a4a;">150</div>
<div class="a t" style="left:1057.4px;top:693px;font-size:17px;letter-spacing:-0.80px;color:#4a4a4a;">50</div>
<div class="a t" style="left:1093.7px;top:693px;font-size:17px;letter-spacing:-0.80px;color:#4a4a4a;">150</div>
<div class="a t" style="left:1147.4px;top:693px;font-size:17px;letter-spacing:-0.80px;color:#4a4a4a;">50</div>
<div class="a t" style="left:1192.4px;top:693px;font-size:17px;letter-spacing:-0.80px;color:#4a4a4a;">20</div>
<div class="a t" style="left:1220.7px;top:693px;font-size:17px;letter-spacing:-0.80px;color:#4a4a4a;">0.</div>
<div class="a t" style="left:365.7px;top:713px;font-size:17px;letter-spacing:-0.18px;color:#4a4a4a;">C420_A...</div>
<div class="a t" style="left:472.0px;top:713px;font-size:17px;letter-spacing:-0.70px;color:#4a4a4a;">0</div>
<div class="a t" style="left:967.4px;top:713px;font-size:17px;letter-spacing:-0.80px;color:#4a4a4a;">50</div>
<div class="a t" style="left:1003.7px;top:713px;font-size:17px;letter-spacing:-0.80px;color:#4a4a4a;">150</div>
<div class="a t" style="left:1057.4px;top:713px;font-size:17px;letter-spacing:-0.80px;color:#4a4a4a;">50</div>
<div class="a t" style="left:1093.7px;top:713px;font-size:17px;letter-spacing:-0.80px;color:#4a4a4a;">150</div>
<div class="a t" style="left:1147.4px;top:713px;font-size:17px;letter-spacing:-0.80px;color:#4a4a4a;">50</div>
<div class="a t" style="left:1192.4px;top:713px;font-size:17px;letter-spacing:-0.80px;color:#4a4a4a;">20</div>
<div class="a t" style="left:1220.7px;top:713px;font-size:17px;letter-spacing:-0.80px;color:#4a4a4a;">0.</div>
<div class="a t" style="left:365.7px;top:733px;font-size:17px;letter-spacing:-0.18px;color:#4a4a4a;">C420_A...</div>
<div class="a t" style="left:472.0px;top:733px;font-size:17px;letter-spacing:-0.70px;color:#4a4a4a;">1</div>
<div class="a t" style="left:967.4px;top:733px;font-size:17px;letter-spacing:-0.80px;color:#4a4a4a;">50</div>
<div class="a t" style="left:1003.7px;top:733px;font-size:17px;letter-spacing:-0.80px;color:#4a4a4a;">150</div>
<div class="a t" style="left:1057.4px;top:733px;font-size:17px;letter-spacing:-0.80px;color:#4a4a4a;">50</div>
<div class="a t" style="left:1093.7px;top:733px;font-size:17px;letter-spacing:-0.80px;color:#4a4a4a;">150</div>
<div class="a t" style="left:1147.4px;top:733px;font-size:17px;letter-spacing:-0.80px;color:#4a4a4a;">50</div>
<div class="a t" style="left:1192.4px;top:733px;font-size:17px;letter-spacing:-0.80px;color:#4a4a4a;">20</div>
<div class="a t" style="left:1220.7px;top:733px;font-size:17px;letter-spacing:-0.80px;color:#4a4a4a;">0.</div>
<div class="a dith" style="left:362px;top:756px;width:875px;height:22px;"></div>
<div class="a sb" style="left:362px;top:756px;width:23px;height:22px;"></div>
<svg class="a" style="left:0;top:0" width="1" height="1"><polygon points="375.912,761.3 375.912,771.7 370.088,766.5" fill="#000"/></svg>
<div class="a sb" style="left:385px;top:756px;width:560px;height:22px;"></div>
<div class="a sb" style="left:1213px;top:756px;width:23px;height:22px;"></div>
<svg class="a" style="left:0;top:0" width="1" height="1"><polygon points="1221.088,761.3 1221.088,771.7 1226.912,766.5" fill="#000"/></svg>
<div class="a face" style="left:1236px;top:756px;width:23px;height:22px;"></div>
<div class="a btn" style="left:360px;top:793px;width:112px;height:33px;"></div>
<div class="a t" style="left:389.8px;top:800px;font-size:17px;letter-spacing:-0.45px;transform:scaleX(0.984);transform-origin:0 50%;color:#303030;">Setting</div>
<div class="a btn" style="left:477px;top:793px;width:112px;height:33px;"></div>
<div class="a btn" style="left:1150px;top:793px;width:113px;height:33px;"></div>
<div class="a t" style="left:1185.2px;top:800px;font-size:17px;letter-spacing:-0.45px;transform:scaleX(0.946);transform-origin:0 50%;color:#303030;">Close</div>
<div class="a win" style="left:482px;top:152px;width:474px;height:777px;box-shadow:inset 1px 1px 0 #d4d0c8,inset 2px 2px 0 #fff,inset -1px 0 0 #404040,inset -2px 0 0 #808080;"></div>
<div class="a " style="left:485px;top:155px;width:469.5px;height:20px;background:linear-gradient(90deg,#0a246a 0%,#16348a 30%,#6d92d8 70%,#a6caf0 100%);"></div>
<div class="a mono" style="left:488px;top:155px;font-size:16.67px;line-height:21px;color:#fff;font-weight:bold;">Tolerance Setting (1297 Pads)</div>
<div class="a btn" style="left:936px;top:157.5px;width:16px;height:15px;"></div>
<svg class="a" style="left:0;top:0" width="1" height="1"><path d="M940.0,161.0 L947.0,168.0 M947.0,161.0 L940.0,168.0" stroke="#000" stroke-width="2.2" fill="none"/></svg>
<div class="a t" style="left:509.2px;top:195px;font-size:17px;letter-spacing:-0.45px;transform:scaleX(0.872);transform-origin:0 50%;color:#444444;">General</div>
<div class="a hl" style="left:503px;top:248px;width:433px;height:2px;"></div>
<div class="a hl" style="left:621px;top:271px;width:315px;height:2px;"></div>
<div class="a hl" style="left:503px;top:438.5px;width:433px;height:2px;"></div>
<div class="a hl" style="left:646px;top:462.5px;width:290px;height:2px;"></div>
<div class="a hl" style="left:503px;top:559.5px;width:433px;height:2px;"></div>
<div class="a hl" style="left:641px;top:584.5px;width:295px;height:2px;"></div>
<div class="a hl" style="left:503px;top:645.5px;width:433px;height:2px;"></div>
<div class="a hl" style="left:583px;top:673.5px;width:353px;height:2px;"></div>
<div class="a hl" style="left:503px;top:872.5px;width:435px;height:2px;"></div>
<div class="a hl" style="left:503px;top:271px;width:9px;height:2px;"></div>
<div class="a hl" style="left:503px;top:462.5px;width:9px;height:2px;"></div>
<div class="a hl" style="left:503px;top:584.5px;width:9px;height:2px;"></div>
<div class="a " style="left:502px;top:204px;width:2px;height:670px;border-left:1px solid #8a8882;border-right:1px solid #f6f4f0;"></div>
<div class="a " style="left:936px;top:204px;width:2px;height:670px;border-left:1px solid #8a8882;border-right:1px solid #f6f4f0;"></div>
<div class="a chk" style="left:512px;top:218px;width:19px;height:19px;"></div>
<div class="a t" style="left:535.9px;top:219px;font-size:17px;letter-spacing:-0.45px;transform:scaleX(0.945);transform-origin:0 50%;color:#444444;">No Use</div>
<div class="a chk" style="left:733.5px;top:218px;width:19px;height:19px;"></div>
<svg class="a" style="left:0;top:0" width="1" height="1"><path d="M738.3,226.8 L741.3,230 L746.7,223.2" stroke="#000" stroke-width="2.7" fill="none"/></svg>
<div class="a t" style="left:756.7px;top:219px;font-size:17px;letter-spacing:-0.45px;transform:scaleX(0.938);transform-origin:0 50%;color:#444444;">Store SPC Data</div>
<div class="a chk" style="left:512px;top:261.5px;width:19px;height:19px;"></div>
<svg class="a" style="left:0;top:0" width="1" height="1"><path d="M516.8,270.3 L519.8,273.5 L525.2,266.7" stroke="#000" stroke-width="2.7" fill="none"/></svg>
<div class="a t" style="left:536.2px;top:262px;font-size:17px;letter-spacing:-0.45px;transform:scaleX(0.958);transform-origin:0 50%;color:#444444;">HAV</div>
<div class="a t" style="left:583.4px;top:262px;font-size:17px;letter-spacing:0.63px;color:#444444;">(%)</div>
<div class="a t" style="left:511.2px;top:303px;font-size:17px;letter-spacing:-0.44px;color:#444444;">Height</div>
<div class="a fld" style="left:644px;top:296px;width:89px;height:27.5px;"></div>
<div class="a t" style="left:703.7px;top:299px;font-size:17px;letter-spacing:-0.75px;color:#43534a;">180</div>
<div class="a t" style="left:592.2px;top:303px;font-size:17px;letter-spacing:-0.45px;transform:scaleX(0.851);transform-origin:0 50%;color:#444444;">USL</div>
<div class="a t" style="left:785.9px;top:303px;font-size:17px;letter-spacing:-0.45px;transform:scaleX(0.851);transform-origin:0 50%;color:#444444;">LSL</div>
<div class="a fld" style="left:835px;top:296px;width:89px;height:27.5px;"></div>
<div class="a t" style="left:903.4px;top:299px;font-size:17px;letter-spacing:-0.75px;color:#43534a;">40</div>
<div class="a t" style="left:511.2px;top:336px;font-size:17px;letter-spacing:-0.45px;transform:scaleX(0.959);transform-origin:0 50%;color:#444444;">Area</div>
<div class="a fld" style="left:644px;top:331px;width:89px;height:27.5px;"></div>
<div class="a t" style="left:703.7px;top:334px;font-size:17px;letter-spacing:-0.75px;color:#43534a;">180</div>
<div class="a t" style="left:592.2px;top:336px;font-size:17px;letter-spacing:-0.45px;transform:scaleX(0.851);transform-origin:0 50%;color:#444444;">USL</div>
<div class="a t" style="left:785.9px;top:336px;font-size:17px;letter-spacing:-0.45px;transform:scaleX(0.851);transform-origin:0 50%;color:#444444;">LSL</div>
<div class="a fld" style="left:835px;top:331px;width:89px;height:27.5px;"></div>
<div class="a t" style="left:903.4px;top:334px;font-size:17px;letter-spacing:-0.75px;color:#43534a;">40</div>
<div class="a t" style="left:511.2px;top:369px;font-size:17px;letter-spacing:-0.45px;color:#444444;">Volume</div>
<div class="a fld" style="left:644px;top:367px;width:89px;height:27.5px;"></div>
<div class="a t" style="left:703.7px;top:370px;font-size:17px;letter-spacing:-0.75px;color:#43534a;">180</div>
<div class="a t" style="left:592.2px;top:369px;font-size:17px;letter-spacing:-0.45px;transform:scaleX(0.851);transform-origin:0 50%;color:#444444;">USL</div>
<div class="a t" style="left:785.9px;top:369px;font-size:17px;letter-spacing:-0.45px;transform:scaleX(0.851);transform-origin:0 50%;color:#444444;">LSL</div>
<div class="a fld" style="left:835px;top:367px;width:89px;height:27.5px;"></div>
<div class="a t" style="left:903.4px;top:370px;font-size:17px;letter-spacing:-0.75px;color:#43534a;">40</div>
<div class="a t" style="left:511.2px;top:403px;font-size:17px;letter-spacing:-0.45px;transform:scaleX(0.988);transform-origin:0 50%;color:#444444;">Warning</div>
<div class="a fld" style="left:644px;top:403px;width:89px;height:27.5px;"></div>
<div class="a t" style="left:712.4px;top:406px;font-size:17px;letter-spacing:-0.75px;color:#43534a;">20</div>
<div class="a " style="left:903px;top:300px;width:1.3px;height:19px;background:#303830;"></div>
<div class="a chk" style="left:512px;top:452px;width:19px;height:19px;"></div>
<svg class="a" style="left:0;top:0" width="1" height="1"><path d="M516.8,460.8 L519.8,464 L525.2,457.2" stroke="#000" stroke-width="2.7" fill="none"/></svg>
<div class="a t" style="left:536.2px;top:453px;font-size:17px;letter-spacing:-0.42px;color:#444444;">Offset</div>
<div class="a t" style="left:593.2px;top:453px;font-size:17px;letter-spacing:0.09px;color:#444444;">(mm)</div>
<div class="a t" style="left:511.2px;top:491px;font-size:17px;letter-spacing:-0.45px;transform:scaleX(0.993);transform-origin:0 50%;color:#444444;">Offset</div>
<div class="a t" style="left:603.2px;top:491px;font-size:17px;letter-spacing:-0.45px;transform:scaleX(0.826);transform-origin:0 50%;color:#444444;">X</div>
<div class="a t" style="left:795.9px;top:491px;font-size:17px;letter-spacing:-0.45px;transform:scaleX(0.826);transform-origin:0 50%;color:#444444;">Y</div>
<div class="a fld" style="left:644px;top:486px;width:89px;height:27px;"></div>
<div class="a t" style="left:699.8px;top:489px;font-size:17px;letter-spacing:-0.75px;color:#43534a;">0.15</div>
<div class="a fld" style="left:835px;top:486px;width:89px;height:27px;"></div>
<div class="a t" style="left:890.8px;top:489px;font-size:17px;letter-spacing:-0.75px;color:#43534a;">0.15</div>
<div class="a t" style="left:511.2px;top:526px;font-size:17px;letter-spacing:-0.45px;transform:scaleX(0.988);transform-origin:0 50%;color:#444444;">Warning</div>
<div class="a fld" style="left:644px;top:521.5px;width:89px;height:26.5px;"></div>
<div class="a t" style="left:691.1px;top:524px;font-size:17px;letter-spacing:-0.75px;color:#43534a;">0.100</div>
<div class="a chk" style="left:512px;top:576px;width:19px;height:19px;"></div>
<svg class="a" style="left:0;top:0" width="1" height="1"><path d="M516.8,584.8 L519.8,588 L525.2,581.2" stroke="#000" stroke-width="2.7" fill="none"/></svg>
<div class="a t" style="left:536.2px;top:577px;font-size:17px;letter-spacing:-0.45px;transform:scaleX(0.947);transform-origin:0 50%;color:#444444;">Bridge</div>
<div class="a t" style="left:596.7px;top:577px;font-size:17px;letter-spacing:0.02px;color:#444444;">(um)</div>
<div class="a t" style="left:571.7px;top:613px;font-size:17px;letter-spacing:-0.44px;color:#444444;">Height</div>
<div class="a fld" style="left:644px;top:608px;width:89px;height:26.5px;"></div>
<div class="a t" style="left:712.4px;top:611px;font-size:17px;letter-spacing:-0.75px;color:#43534a;">60</div>
<div class="a t" style="left:760.9px;top:610px;font-size:17px;letter-spacing:-0.45px;transform:scaleX(0.980);transform-origin:0 50%;color:#444444;">Length</div>
<div class="a fld" style="left:835px;top:608px;width:89px;height:26.5px;"></div>
<div class="a t" style="left:903.4px;top:611px;font-size:17px;letter-spacing:-0.75px;color:#43534a;">80</div>
<div class="a t" style="left:509.2px;top:665px;font-size:17px;letter-spacing:-0.20px;color:#444444;">Algorithm</div>
<div class="a t" style="left:511.2px;top:700px;font-size:17px;letter-spacing:-0.45px;transform:scaleX(0.975);transform-origin:0 50%;color:#444444;">Window</div>
<div class="a fld" style="left:599px;top:692.5px;width:89px;height:27.5px;"></div>
<div class="a t" style="left:650.0px;top:695px;font-size:17px;letter-spacing:-0.75px;color:#43534a;">1000</div>
<div class="a t" style="left:732.2px;top:700px;font-size:17px;letter-spacing:-0.45px;transform:scaleX(0.945);transform-origin:0 50%;color:#444444;">Mask Upper</div>
<div class="a fld" style="left:835px;top:692.5px;width:89px;height:27.5px;"></div>
<div class="a t" style="left:894.7px;top:695px;font-size:17px;letter-spacing:-0.75px;color:#43534a;">300</div>
<div class="a t" style="left:511.2px;top:735px;font-size:17px;letter-spacing:-0.45px;transform:scaleX(0.950);transform-origin:0 50%;color:#444444;">Extend</div>
<div class="a fld" style="left:599px;top:728.5px;width:89px;height:27.5px;"></div>
<div class="a t" style="left:658.7px;top:731px;font-size:17px;letter-spacing:-0.75px;color:#43534a;">100</div>
<div class="a t" style="left:732.2px;top:735px;font-size:17px;letter-spacing:-0.45px;transform:scaleX(0.941);transform-origin:0 50%;color:#444444;">Mask Lower</div>
<div class="a fld" style="left:835px;top:728.5px;width:89px;height:27.5px;"></div>
<div class="a t" style="left:894.7px;top:731px;font-size:17px;letter-spacing:-0.75px;color:#43534a;">300</div>
<div class="a t" style="left:511.2px;top:771px;font-size:17px;letter-spacing:-0.45px;transform:scaleX(0.985);transform-origin:0 50%;color:#444444;">Threshold</div>
<div class="a fld" style="left:599px;top:764.5px;width:89px;height:27.5px;"></div>
<div class="a t" style="left:667.4px;top:767px;font-size:17px;letter-spacing:-0.75px;color:#43534a;">30</div>
<div class="a t" style="left:732.2px;top:771px;font-size:17px;letter-spacing:-0.25px;color:#444444;">Height Limit</div>
<div class="a fld" style="left:835px;top:764.5px;width:89px;height:27.5px;"></div>
<div class="a t" style="left:903.4px;top:767px;font-size:17px;letter-spacing:-0.75px;color:#43534a;">10</div>
<div class="a t" style="left:511.2px;top:806px;font-size:17px;letter-spacing:-0.45px;transform:scaleX(0.910);transform-origin:0 50%;color:#444444;">BaseRatio</div>
<div class="a fld" style="left:599px;top:800px;width:89px;height:27.5px;"></div>
<div class="a t" style="left:667.4px;top:803px;font-size:17px;letter-spacing:-0.75px;color:#43534a;">40</div>
<div class="a t" style="left:732.2px;top:806px;font-size:17px;letter-spacing:-0.45px;transform:scaleX(0.962);transform-origin:0 50%;color:#444444;">Area</div>
<div class="a fld" style="left:835px;top:800px;width:89px;height:27.5px;"></div>
<div class="a t" style="left:912.1px;top:803px;font-size:17px;letter-spacing:-0.75px;color:#43534a;">1</div>
<div class="a t" style="left:732.2px;top:842px;font-size:17px;letter-spacing:-0.23px;color:#444444;">Volume Limit</div>
<div class="a fld" style="left:835px;top:836.5px;width:89px;height:27.5px;"></div>
<div class="a t" style="left:912.1px;top:839px;font-size:17px;letter-spacing:-0.75px;color:#43534a;">1</div>
<div class="a btn" style="left:701px;top:885.5px;width:114px;height:32px;box-shadow:inset 0 0 0 1.5px #000,inset -2.5px -2.5px 0 #404040,inset 2.5px 2.5px 0 #fff,inset -3.5px -3.5px 0 #808080;"></div>
<div class="a t" style="left:745.9px;top:891px;font-size:17px;letter-spacing:-0.45px;transform:scaleX(0.887);transform-origin:0 50%;color:#303030;">OK</div>
<div class="a btn" style="left:825.5px;top:885.5px;width:114px;height:32px;"></div>
<div class="a t" style="left:857.0px;top:891px;font-size:17px;letter-spacing:-0.45px;transform:scaleX(0.906);transform-origin:0 50%;color:#303030;">Cancel</div>
<svg class="a" style="left:0;top:0" width="1440" height="1080"><rect x="504.4" y="204.4" width="431.6" height="659.8" fill="none" stroke="#fe0000" stroke-width="4.6"/><polygon points="340.4,774.1 389.3,791.6 397.8,776.5 413.7,789.6 439.8,765.1 438.1,786.9 466.4,784.3 455.9,796.2 488.3,800.1 461.8,810.0 491.7,822.9 457.9,821.2 464.6,843.2 436.8,827.8 430.3,848.8 411.7,829.2 397.9,857.8 391.9,832.5 372.5,840.4 376.7,825.2 337.4,827.7 363.5,815.3 337.0,801.4 370.8,796.8" fill="none" stroke="#fe0000" stroke-width="3.4" stroke-linejoin="miter" stroke-miterlimit="10"/><polygon points="688.4,862.8 737.3,880.3 745.8,865.2 761.7,878.3 787.8,853.8 786.1,875.6 814.4,873.0 803.9,884.9 836.3,888.8 809.8,898.7 839.7,911.6 805.9,909.9 812.6,931.9 784.8,916.5 778.3,937.5 759.7,917.9 745.9,946.5 739.9,921.2 720.5,929.1 724.7,913.9 685.4,916.4 711.5,904.0 685.0,890.1 718.8,885.5" fill="none" stroke="#fe0000" stroke-width="3.4" stroke-linejoin="miter" stroke-miterlimit="10"/></svg></body></html>
